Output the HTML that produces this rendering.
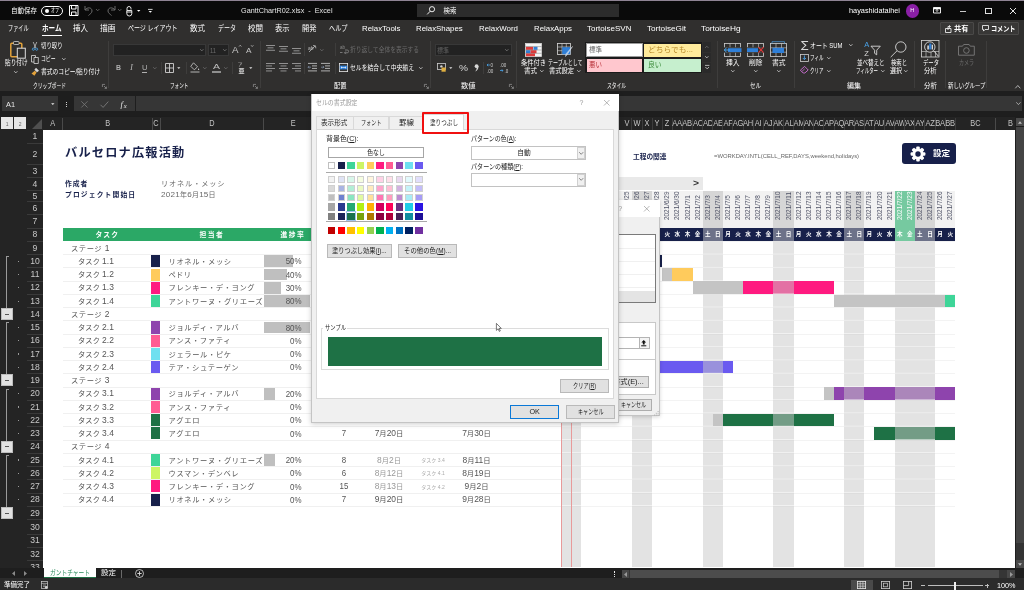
<!DOCTYPE html>
<html lang="ja"><head><meta charset="utf-8"><title>GanttChartR02.xlsx - Excel</title><style>
html,body{margin:0;padding:0;background:#1d1d1d;}
body{width:1024px;height:590px;position:relative;overflow:hidden;will-change:transform;font-family:"Liberation Sans","Noto Sans CJK JP",sans-serif;}
.a{position:absolute;box-sizing:border-box;}
.t{white-space:pre;}
.d{font-size:116%;}
.r{left:50%;bottom:0;font-size:6.4px;line-height:8px;height:8px;white-space:nowrap;transform-origin:0 50%;transform:translate(0,4px) rotate(-90deg);}
svg{position:absolute;overflow:visible;}
</style></head><body>
<div class="a " style="left:0px;top:0px;width:1024px;height:19.5px;background:#0a0a0a;"></div>
<div class="a " style="left:0px;top:0px;width:1024px;height:1px;background:#8f8494;"></div>
<div class="a t" style="left:11px;top:3.5px;height:14px;line-height:14px;font-size:7px;color:#fff;transform:scaleX(0.929);transform-origin:0 50%;">自動保存</div>
<div class="a " style="left:41px;top:5.5px;width:21.5px;height:10px;border:1px solid #fff;border-radius:5px;"></div>
<div class="a " style="left:44.5px;top:8.5px;width:4px;height:4px;background:#fff;border-radius:2px;"></div>
<div class="a t" style="left:51px;top:5.0px;height:11px;line-height:11px;font-size:5.5px;color:#fff;transform:scaleX(0.726);transform-origin:0 50%;">オフ</div>
<svg style="left:69px;top:5px;" width="10" height="11" viewBox="0 0 10 11"><path d="M0.5 0.5h8.5v10h-8.5z M2.5 0.5v3.5h4.5v-3.5 M2.5 10.5v-3.5h4.5v3.5" fill="none" stroke="#fff" stroke-width="1"/></svg>
<svg style="left:84px;top:5px;" width="10" height="10" viewBox="0 0 10 10"><path d="M1 1v4h4 M1 5c2-3 7-3 7 1c0 2-2 3-3.5 4.5" fill="none" stroke="#6b6b6b" stroke-width="1"/></svg>
<svg style="left:96px;top:9px;" width="4" height="3" viewBox="0 0 4 3"><path d="M0 0l1.7 1.8l1.7-1.8" fill="none" stroke="#6b6b6b" stroke-width="0.8"/></svg>
<svg style="left:106px;top:5px;" width="10" height="10" viewBox="0 0 10 10"><path d="M9 1v4h-4 M9 5c-2-3-7-3-7 1c0 2 2 3 3.5 4.5" fill="none" stroke="#6b6b6b" stroke-width="1"/></svg>
<svg style="left:117.5px;top:9px;" width="4" height="3" viewBox="0 0 4 3"><path d="M0 0l1.7 1.8l1.7-1.8" fill="none" stroke="#6b6b6b" stroke-width="0.8"/></svg>
<svg style="left:126px;top:6px;" width="7" height="10" viewBox="0 0 7 10"><path d="M1 4v-1.5a1.5 1.5 0 0 1 4 0v1 M0.8 4.5h5v3a2.3 2.3 0 0 1-5 0z M0.8 6h5" fill="none" stroke="#fff" stroke-width="0.9"/></svg>
<svg style="left:136.5px;top:9.5px;" width="4" height="3" viewBox="0 0 4 3"><path d="M0 0l1.7 1.8l1.7-1.8z" fill="#fff"/></svg>
<svg style="left:148px;top:8.5px;" width="5" height="4" viewBox="0 0 5 4"><path d="M0 0.4h4.6" stroke="#fff" stroke-width="0.8"/><path d="M0.6 2l1.7 1.8l1.7-1.8z" fill="#fff"/></svg>
<div class="a t" style="left:241px;top:3.5px;height:14px;line-height:14px;font-size:7.2px;color:#e6e6e6;transform:scaleX(1.009);transform-origin:0 50%;">GanttChartR02.xlsx  -  Excel</div>
<div class="a " style="left:417px;top:3.5px;width:202px;height:13.5px;background:#2c2c2c;"></div>
<svg style="left:427px;top:6px;" width="8" height="9" viewBox="0 0 8 9"><circle cx="5" cy="3.2" r="2.6" fill="none" stroke="#fff" stroke-width="0.9"/><path d="M3.2 5.2l-3 3.2" stroke="#fff" stroke-width="0.9"/></svg>
<div class="a t" style="left:443.5px;top:4.3px;height:13px;line-height:13px;font-size:6.5px;color:#fff;transform:scaleX(1.000);transform-origin:0 50%;">検索</div>
<div class="a t" style="left:848.5px;top:3.5px;height:14px;line-height:14px;font-size:7.2px;color:#fff;transform:scaleX(1.021);transform-origin:0 50%;">hayashidataihei</div>
<div class="a " style="left:905.5px;top:4px;width:13.5px;height:13.5px;background:#8a1fa6;border-radius:7px;"></div>
<div class="a t" style="left:905.5px;top:5.3px;height:11px;line-height:11px;font-size:5.5px;color:#fff;width:13.5px;text-align:center;">H</div>
<svg style="left:933px;top:7px;" width="8" height="7" viewBox="0 0 8 7"><path d="M0.5 0.5h7v5.5h-7z" fill="none" stroke="#fff" stroke-width="0.9"/><path d="M0.5 1.5h7" stroke="#fff" stroke-width="1.6"/><path d="M4 5v-2.5 M2.8 3.6l1.2-1.2l1.2 1.2" fill="none" stroke="#fff" stroke-width="0.8"/></svg>
<div class="a " style="left:960px;top:10.6px;width:6px;height:0.9px;background:#c8c8c8;"></div>
<div class="a " style="left:985px;top:7.5px;width:6.5px;height:6.5px;border:0.9px solid #e0e0e0;"></div>
<svg style="left:1009.5px;top:7.5px;" width="6" height="6" viewBox="0 0 6 6"><path d="M0 0l6 6M6 0l-6 6" stroke="#fff" stroke-width="0.9"/></svg>
<div class="a " style="left:0px;top:19.5px;width:1024px;height:71.7px;background:#302f2e;"></div>
<div class="a t" style="left:8px;top:20.8px;height:15px;line-height:15px;font-size:7.6px;color:#fff;transform:scaleX(0.675);transform-origin:0 50%;">ファイル</div>
<div class="a t" style="left:42px;top:20.8px;height:15px;line-height:15px;font-size:7.6px;color:#fff;font-weight:bold;transform:scaleX(0.864);transform-origin:0 50%;">ホーム</div>
<div class="a t" style="left:73px;top:20.8px;height:15px;line-height:15px;font-size:7.6px;color:#fff;transform:scaleX(0.988);transform-origin:0 50%;">挿入</div>
<div class="a t" style="left:100px;top:20.8px;height:15px;line-height:15px;font-size:7.6px;color:#fff;transform:scaleX(1.021);transform-origin:0 50%;">描画</div>
<div class="a t" style="left:128px;top:20.8px;height:15px;line-height:15px;font-size:7.6px;color:#fff;transform:scaleX(0.789);transform-origin:0 50%;">ページ レイアウト</div>
<div class="a t" style="left:190px;top:20.8px;height:15px;line-height:15px;font-size:7.6px;color:#fff;transform:scaleX(0.988);transform-origin:0 50%;">数式</div>
<div class="a t" style="left:218px;top:20.8px;height:15px;line-height:15px;font-size:7.6px;color:#fff;transform:scaleX(0.790);transform-origin:0 50%;">データ</div>
<div class="a t" style="left:248px;top:20.8px;height:15px;line-height:15px;font-size:7.6px;color:#fff;transform:scaleX(0.988);transform-origin:0 50%;">校閲</div>
<div class="a t" style="left:275px;top:20.8px;height:15px;line-height:15px;font-size:7.6px;color:#fff;transform:scaleX(0.955);transform-origin:0 50%;">表示</div>
<div class="a t" style="left:302px;top:20.8px;height:15px;line-height:15px;font-size:7.6px;color:#fff;transform:scaleX(0.955);transform-origin:0 50%;">開発</div>
<div class="a t" style="left:329px;top:20.8px;height:15px;line-height:15px;font-size:7.6px;color:#fff;transform:scaleX(0.812);transform-origin:0 50%;">ヘルプ</div>
<div class="a t" style="left:362px;top:20.8px;height:15px;line-height:15px;font-size:7.6px;color:#fff;transform:scaleX(1.036);transform-origin:0 50%;">RelaxTools</div>
<div class="a t" style="left:415.7px;top:20.8px;height:15px;line-height:15px;font-size:7.6px;color:#fff;transform:scaleX(1.036);transform-origin:0 50%;">RelaxShapes</div>
<div class="a t" style="left:478.5px;top:20.8px;height:15px;line-height:15px;font-size:7.6px;color:#fff;transform:scaleX(1.042);transform-origin:0 50%;">RelaxWord</div>
<div class="a t" style="left:533.5px;top:20.8px;height:15px;line-height:15px;font-size:7.6px;color:#fff;transform:scaleX(1.034);transform-origin:0 50%;">RelaxApps</div>
<div class="a t" style="left:587px;top:20.8px;height:15px;line-height:15px;font-size:7.6px;color:#fff;transform:scaleX(1.054);transform-origin:0 50%;">TortoiseSVN</div>
<div class="a t" style="left:647px;top:20.8px;height:15px;line-height:15px;font-size:7.6px;color:#fff;transform:scaleX(1.074);transform-origin:0 50%;">TortoiseGit</div>
<div class="a t" style="left:701px;top:20.8px;height:15px;line-height:15px;font-size:7.6px;color:#fff;transform:scaleX(1.088);transform-origin:0 50%;">TortoiseHg</div>
<div class="a " style="left:42px;top:34.5px;width:19.5px;height:1.5px;background:#fff;"></div>
<div class="a " style="left:940px;top:22px;width:33.5px;height:13px;background:#383736;border-radius:1px;border:0.8px solid #4a4948;"></div>
<svg style="left:945px;top:24.5px;" width="7" height="8" viewBox="0 0 7 8"><path d="M0.5 3.5h5.5v4h-5.5z" fill="none" stroke="#fff" stroke-width="0.8"/><path d="M3 5v-3.5h2 M4 0.3l1.5 1.2l-1.5 1.2" fill="none" stroke="#fff" stroke-width="0.8"/></svg>
<div class="a t" style="left:953.5px;top:21.1px;height:15px;line-height:15px;font-size:7.4px;color:#fff;font-weight:bold;transform:scaleX(0.980);transform-origin:0 50%;">共有</div>
<div class="a " style="left:977.5px;top:22px;width:41.5px;height:13px;background:#383736;border-radius:1px;border:0.8px solid #4a4948;"></div>
<svg style="left:982px;top:25px;" width="7" height="7" viewBox="0 0 7 7"><path d="M0.5 0.5h6v4h-3.5l-1.5 1.6v-1.6h-1z" fill="none" stroke="#fff" stroke-width="0.8"/></svg>
<div class="a t" style="left:990.5px;top:21.1px;height:15px;line-height:15px;font-size:7.4px;color:#fff;font-weight:bold;transform:scaleX(0.828);transform-origin:0 50%;">コメント</div>
<svg style="left:10px;top:41px;" width="16" height="18" viewBox="0 0 16 18"><rect x="0.8" y="2.2" width="11" height="13.5" rx="1" fill="none" stroke="#e2a23b" stroke-width="1.5"/><rect x="3.5" y="0.5" width="5.5" height="3" rx="0.8" fill="#302f2e" stroke="#d0d0d0" stroke-width="0.8"/><rect x="7.3" y="7.2" width="8" height="10" fill="#302f2e" stroke="#e0e0e0" stroke-width="1"/></svg>
<div class="a t" style="left:4.8px;top:56.0px;height:14px;line-height:14px;font-size:7px;color:#fff;transform:scaleX(0.804);transform-origin:0 50%;">貼り付け</div>
<svg style="left:14px;top:71px;" width="4" height="3" viewBox="0 0 4 3"><path d="M0.2 0.2l1.6 1.7l1.6-1.7" fill="none" stroke="#d0d0d0" stroke-width="0.8"/></svg>
<svg style="left:32px;top:41.5px;" width="6" height="9" viewBox="0 0 6 9"><path d="M1.2 0l2.6 6 M4.8 0l-2.6 6" stroke="#d8d8d8" stroke-width="0.7"/><circle cx="1.4" cy="7.2" r="1.1" fill="none" stroke="#4aa3e8" stroke-width="0.8"/><circle cx="4.6" cy="7.2" r="1.1" fill="none" stroke="#4aa3e8" stroke-width="0.8"/></svg>
<div class="a t" style="left:41px;top:39.0px;height:14px;line-height:14px;font-size:7px;color:#fff;transform:scaleX(0.768);transform-origin:0 50%;">切り取り</div>
<svg style="left:31px;top:54.5px;" width="8" height="9" viewBox="0 0 8 9"><path d="M0.5 0.5h4v6.5h-4z" fill="none" stroke="#d8d8d8" stroke-width="0.8"/><path d="M3 2.5h4.3v6h-4.3z" fill="#302f2e" stroke="#d8d8d8" stroke-width="0.8"/></svg>
<div class="a t" style="left:41px;top:52.3px;height:14px;line-height:14px;font-size:7px;color:#fff;transform:scaleX(0.690);transform-origin:0 50%;">コピー</div>
<svg style="left:61.5px;top:58px;" width="4" height="3" viewBox="0 0 4 3"><path d="M0.2 0.2l1.6 1.7l1.6-1.7" fill="none" stroke="#d0d0d0" stroke-width="0.8"/></svg>
<svg style="left:30.5px;top:67px;" width="9" height="9" viewBox="0 0 9 9"><path d="M5 0.8l3 3l-2 1.5l-2.6-2.6z" fill="#d8d8d8"/><path d="M0.5 6.5l3.3-2.7l1.8 1.8l-2.2 3.2z" fill="#e2a23b"/></svg>
<div class="a t" style="left:41px;top:65.3px;height:14px;line-height:14px;font-size:7px;color:#fff;transform:scaleX(0.820);transform-origin:0 50%;">書式のコピー/貼り付け</div>
<div class="a t" style="left:32.5px;top:78.5px;height:14px;line-height:14px;font-size:6.8px;color:#fff;transform:scaleX(0.694);transform-origin:0 50%;">クリップボード</div>
<svg style="left:101.5px;top:84px;" width="5" height="5" viewBox="0 0 5 5"><path d="M0.4 3v-2.6h2.6 M2 2l2.4 2.4 M4.4 2.6v1.8h-1.8" fill="none" stroke="#9a9a9a" stroke-width="0.7"/></svg>
<div class="a " style="left:107.5px;top:41px;width:1px;height:47px;background:#3e3d3c;"></div>
<div class="a " style="left:112.5px;top:43.6px;width:93px;height:12.5px;background:#222;border:1px solid #383838;"></div>
<svg style="left:199.5px;top:49px;" width="4" height="3" viewBox="0 0 4 3"><path d="M0.2 0.2l1.6 1.7l1.6-1.7" fill="none" stroke="#7a7a7a" stroke-width="0.8"/></svg>
<div class="a " style="left:207.5px;top:43.6px;width:21px;height:12.5px;background:#222;border:1px solid #383838;"></div>
<div class="a t" style="left:209.5px;top:43.5px;height:14px;line-height:14px;font-size:6.8px;color:#6c6c6c;transform:scaleX(0.850);transform-origin:0 50%;">11</div>
<svg style="left:223px;top:49px;" width="4" height="3" viewBox="0 0 4 3"><path d="M0.2 0.2l1.6 1.7l1.6-1.7" fill="none" stroke="#7a7a7a" stroke-width="0.8"/></svg>
<div class="a t" style="left:232px;top:41.0px;height:18px;line-height:18px;font-size:9px;color:#c4c4c4;transform:scaleX(1.081);transform-origin:0 50%;">A</div>
<svg style="left:238.5px;top:45px;" width="3" height="2" viewBox="0 0 3 2"><path d="M0 1.6l1.2-1.4l1.2 1.4" fill="none" stroke="#d8d8d8" stroke-width="0.6"/></svg>
<div class="a t" style="left:245.5px;top:42.5px;height:16px;line-height:16px;font-size:8px;color:#c4c4c4;transform:scaleX(1.029);transform-origin:0 50%;">A</div>
<svg style="left:251.3px;top:45.2px;" width="3" height="2" viewBox="0 0 3 2"><path d="M0 0.2l1.2 1.4l1.2-1.4" fill="none" stroke="#d8d8d8" stroke-width="0.6"/></svg>
<div class="a t" style="left:116px;top:60.0px;height:15px;line-height:15px;font-size:7.5px;color:#b0b0b0;font-weight:bold;transform:scaleX(0.922);transform-origin:0 50%;">B</div>
<div class="a t" style="left:129.5px;top:60.0px;height:15px;line-height:15px;font-size:7.5px;color:#b0b0b0;font-style:italic;font-family:'Liberation Serif',serif;transform:scaleX(1.200);transform-origin:0 50%;">I</div>
<div class="a t" style="left:141.5px;top:59.5px;height:15px;line-height:15px;font-size:7.5px;color:#b0b0b0;transform:scaleX(1.014);transform-origin:0 50%;">U</div>
<div class="a " style="left:141.5px;top:72px;width:5.5px;height:0.8px;background:#b0b0b0;"></div>
<svg style="left:153px;top:66.5px;" width="4" height="3" viewBox="0 0 4 3"><path d="M0.2 0.2l1.6 1.7l1.6-1.7" fill="none" stroke="#6c6c6c" stroke-width="0.8"/></svg>
<div class="a " style="left:160.5px;top:62px;width:1px;height:12px;background:#3e3d3c;"></div>
<svg style="left:164.5px;top:62.5px;" width="9" height="10" viewBox="0 0 9 10"><path d="M0.5 0.5h8v9h-8z M4.5 0.5v9 M0.5 5h8" fill="none" stroke="#d0d0d0" stroke-width="0.9"/></svg>
<svg style="left:177px;top:66.5px;" width="4" height="3" viewBox="0 0 4 3"><path d="M0.2 0.2l1.6 1.8l1.6-1.8z" fill="#e0e0e0"/></svg>
<div class="a " style="left:185.5px;top:62px;width:1px;height:12px;background:#3e3d3c;"></div>
<svg style="left:190px;top:62px;" width="10" height="11" viewBox="0 0 10 11"><path d="M3.5 0.8l4 4l-3.2 3l-3.5-3.5z" fill="none" stroke="#cfcfcf" stroke-width="0.8"/><path d="M8.6 6.3c0.8 1 0.8 1.8 0 1.8s-0.8-0.8 0-1.8" fill="#cfcfcf"/><rect x="0.5" y="9.3" width="9" height="1.4" fill="#8f8f8f"/></svg>
<svg style="left:203px;top:66.5px;" width="4" height="3" viewBox="0 0 4 3"><path d="M0.2 0.2l1.6 1.7l1.6-1.7" fill="none" stroke="#6c6c6c" stroke-width="0.8"/></svg>
<div class="a t" style="left:212.5px;top:58.5px;height:16px;line-height:16px;font-size:8px;color:#c0c0c0;transform:scaleX(1.310);transform-origin:0 50%;">A</div>
<div class="a " style="left:211.5px;top:71.3px;width:9px;height:1.4px;background:#8f8f8f;"></div>
<svg style="left:224px;top:66.5px;" width="4" height="3" viewBox="0 0 4 3"><path d="M0.2 0.2l1.6 1.7l1.6-1.7" fill="none" stroke="#6c6c6c" stroke-width="0.8"/></svg>
<div class="a " style="left:232px;top:62px;width:1px;height:12px;background:#3e3d3c;"></div>
<svg style="left:238px;top:62px;" width="6" height="11" viewBox="0 0 6 11"><text x="0" y="4" font-size="4.5" fill="#d0d0d0" font-family="Liberation Sans, Noto Sans CJK JP, sans-serif">ア</text><text x="0.5" y="10.5" font-size="6" fill="#d0d0d0" font-weight="bold" font-family="Liberation Sans, Noto Sans CJK JP, sans-serif">亜</text></svg>
<svg style="left:248.5px;top:66.5px;" width="4" height="3" viewBox="0 0 4 3"><path d="M0.2 0.2l1.6 1.8l1.6-1.8z" fill="#e0e0e0"/></svg>
<div class="a t" style="left:170px;top:78.5px;height:14px;line-height:14px;font-size:6.8px;color:#fff;transform:scaleX(0.680);transform-origin:0 50%;">フォント</div>
<svg style="left:253px;top:84px;" width="5" height="5" viewBox="0 0 5 5"><path d="M0.4 3v-2.6h2.6 M2 2l2.4 2.4 M4.4 2.6v1.8h-1.8" fill="none" stroke="#9a9a9a" stroke-width="0.7"/></svg>
<div class="a " style="left:259.5px;top:41px;width:1px;height:47px;background:#3e3d3c;"></div>
<svg style="left:266px;top:44.5px;" width="9" height="7.199999999999999" viewBox="0 0 9 7.199999999999999"><rect x="0.0" y="0.0" width="9" height="0.9" fill="#9c9c9c"/><rect x="1.5" y="2.4" width="6" height="0.9" fill="#9c9c9c"/><rect x="0.0" y="4.8" width="9" height="0.9" fill="#9c9c9c"/></svg>
<svg style="left:279px;top:46px;" width="9" height="7.199999999999999" viewBox="0 0 9 7.199999999999999"><rect x="0.0" y="0.0" width="9" height="0.9" fill="#9c9c9c"/><rect x="1.5" y="2.4" width="6" height="0.9" fill="#9c9c9c"/><rect x="0.0" y="4.8" width="9" height="0.9" fill="#9c9c9c"/></svg>
<svg style="left:292px;top:48px;" width="9" height="7.199999999999999" viewBox="0 0 9 7.199999999999999"><rect x="0.0" y="0.0" width="9" height="0.9" fill="#9c9c9c"/><rect x="1.5" y="2.4" width="6" height="0.9" fill="#9c9c9c"/><rect x="0.0" y="4.8" width="9" height="0.9" fill="#9c9c9c"/></svg>
<div class="a " style="left:266px;top:44px;width:9px;height:0px;"></div>
<div class="a " style="left:304px;top:43px;width:1px;height:13px;background:#3e3d3c;"></div>
<svg style="left:308px;top:44px;" width="9" height="10" viewBox="0 0 9 10"><path d="M1 8l6-6 M5 1.5l2.5 0.3l0.3 2.5" fill="none" stroke="#bdbdbd" stroke-width="0.8"/><text x="0" y="6" font-size="5" fill="#bdbdbd" font-family="Liberation Sans, sans-serif">ab</text></svg>
<svg style="left:320px;top:49px;" width="4" height="3" viewBox="0 0 4 3"><path d="M0.2 0.2l1.6 1.7l1.6-1.7" fill="none" stroke="#6c6c6c" stroke-width="0.8"/></svg>
<div class="a " style="left:334.5px;top:43px;width:1px;height:13px;background:#3e3d3c;"></div>
<svg style="left:339.5px;top:45px;" width="9" height="10" viewBox="0 0 9 10"><text x="0" y="4" font-size="4.6" fill="#8a8a8a" font-family="Liberation Sans, sans-serif">ab</text><path d="M0 7.5h2.5 M5 5h2.2a1.4 1.4 0 0 1 0 2.8h-2.6 M5.8 6.5l-1.3 1.3l1.3 1.3" fill="none" stroke="#8a8a8a" stroke-width="0.8"/></svg>
<div class="a t" style="left:349.5px;top:43.3px;height:14px;line-height:14px;font-size:7px;color:#6a6a6a;transform:scaleX(0.823);transform-origin:0 50%;">折り返して全体を表示する</div>
<svg style="left:266px;top:62.5px;" width="9" height="10.0" viewBox="0 0 9 10.0"><rect x="0" y="0.0" width="9" height="0.9" fill="#9c9c9c"/><rect x="0" y="2.5" width="6" height="0.9" fill="#9c9c9c"/><rect x="0" y="5.0" width="9" height="0.9" fill="#9c9c9c"/><rect x="0" y="7.5" width="6" height="0.9" fill="#9c9c9c"/></svg>
<svg style="left:279px;top:62.5px;" width="9" height="10.0" viewBox="0 0 9 10.0"><rect x="0.0" y="0.0" width="9" height="0.9" fill="#9c9c9c"/><rect x="1.5" y="2.5" width="6" height="0.9" fill="#9c9c9c"/><rect x="0.0" y="5.0" width="9" height="0.9" fill="#9c9c9c"/><rect x="1.5" y="7.5" width="6" height="0.9" fill="#9c9c9c"/></svg>
<svg style="left:292px;top:62.5px;" width="9" height="10.0" viewBox="0 0 9 10.0"><rect x="0" y="0.0" width="9" height="0.9" fill="#9c9c9c"/><rect x="3" y="2.5" width="6" height="0.9" fill="#9c9c9c"/><rect x="0" y="5.0" width="9" height="0.9" fill="#9c9c9c"/><rect x="3" y="7.5" width="6" height="0.9" fill="#9c9c9c"/></svg>
<div class="a " style="left:304px;top:62px;width:1px;height:12px;background:#3e3d3c;"></div>
<svg style="left:308px;top:62.5px;" width="9" height="10" viewBox="0 0 9 10"><path d="M0 0.4h9 M4 2.9h5 M4 5.4h5 M0 7.9h9" stroke="#bdbdbd" stroke-width="0.9"/><path d="M3 4.2h-3 M1.2 3l-1.2 1.2l1.2 1.2" fill="none" stroke="#8a9ab0" stroke-width="0.7"/></svg>
<svg style="left:321px;top:62.5px;" width="9" height="10" viewBox="0 0 9 10"><path d="M0 0.4h9 M4 2.9h5 M4 5.4h5 M0 7.9h9" stroke="#bdbdbd" stroke-width="0.9"/><path d="M0 4.2h3 M1.8 3l1.2 1.2l-1.2 1.2" fill="none" stroke="#8a9ab0" stroke-width="0.7"/></svg>
<div class="a " style="left:334.5px;top:62px;width:1px;height:12px;background:#3e3d3c;"></div>
<svg style="left:338.5px;top:63px;" width="9" height="9" viewBox="0 0 9 9"><rect x="0.4" y="0.4" width="8.2" height="8.2" fill="none" stroke="#e8e8e8" stroke-width="0.8"/><rect x="0.8" y="2.6" width="7.4" height="3.8" fill="#2f7fd8"/><path d="M2 4.5h5 M3 3.6l-1 0.9l1 0.9 M6 3.6l1 0.9l-1 0.9" fill="none" stroke="#fff" stroke-width="0.6"/></svg>
<div class="a t" style="left:349.5px;top:60.8px;height:14px;line-height:14px;font-size:7px;color:#fff;transform:scaleX(0.833);transform-origin:0 50%;">セルを結合して中央揃え</div>
<svg style="left:418.5px;top:66.5px;" width="4" height="3" viewBox="0 0 4 3"><path d="M0.2 0.2l1.6 1.7l1.6-1.7" fill="none" stroke="#d0d0d0" stroke-width="0.8"/></svg>
<div class="a t" style="left:334px;top:78.5px;height:14px;line-height:14px;font-size:6.8px;color:#fff;transform:scaleX(0.920);transform-origin:0 50%;">配置</div>
<svg style="left:423.5px;top:84px;" width="5" height="5" viewBox="0 0 5 5"><path d="M0.4 3v-2.6h2.6 M2 2l2.4 2.4 M4.4 2.6v1.8h-1.8" fill="none" stroke="#9a9a9a" stroke-width="0.7"/></svg>
<div class="a " style="left:430px;top:41px;width:1px;height:47px;background:#3e3d3c;"></div>
<div class="a " style="left:434.5px;top:43.6px;width:77px;height:12.5px;background:#222;border:1px solid #383838;"></div>
<div class="a t" style="left:437px;top:43.5px;height:14px;line-height:14px;font-size:6.8px;color:#5f5f5f;transform:scaleX(0.883);transform-origin:0 50%;">標準</div>
<svg style="left:504.5px;top:49px;" width="4" height="3" viewBox="0 0 4 3"><path d="M0.2 0.2l1.6 1.7l1.6-1.7" fill="none" stroke="#7a7a7a" stroke-width="0.8"/></svg>
<svg style="left:436.5px;top:63px;" width="9" height="9" viewBox="0 0 9 9"><rect x="0.4" y="0.4" width="8" height="6" fill="none" stroke="#cfcfcf" stroke-width="0.8"/><circle cx="4.4" cy="3.4" r="1.2" fill="#cfcfcf"/><rect x="4.5" y="4.5" width="4.2" height="4.2" fill="#e0b040"/></svg>
<svg style="left:448.5px;top:66.5px;" width="4" height="3" viewBox="0 0 4 3"><path d="M0.2 0.2l1.6 1.8l1.6-1.8z" fill="#e0e0e0"/></svg>
<div class="a t" style="left:458.5px;top:58.5px;height:18px;line-height:18px;font-size:9px;color:#d8d8d8;transform:scaleX(1.123);transform-origin:0 50%;">%</div>
<svg style="left:474px;top:63.5px;" width="5" height="8" viewBox="0 0 5 8"><circle cx="2.6" cy="2.2" r="1.9" fill="#d8d8d8"/><path d="M4.4 2.2c0.3 2.6-1 4.4-3.4 5.2c1.4-1.2 1.8-2.4 1.6-3.8z" fill="#d8d8d8"/></svg>
<div class="a " style="left:483px;top:62px;width:1px;height:12px;background:#3e3d3c;"></div>
<svg style="left:487px;top:62.5px;" width="10" height="10" viewBox="0 0 10 10"><path d="M0 2h3 M1.2 0.8l-1.2 1.2l1.2 1.2" fill="none" stroke="#4aa3e8" stroke-width="0.8"/><text x="3.4" y="4.2" font-size="4.5" fill="#cfcfcf" font-family="Liberation Sans, sans-serif">0</text><text x="0" y="9.6" font-size="4.5" fill="#cfcfcf" font-family="Liberation Sans, sans-serif">.00</text></svg>
<svg style="left:500px;top:62.5px;" width="10" height="10" viewBox="0 0 10 10"><path d="M0 7.5h3 M1.8 6.3l1.2 1.2l-1.2 1.2" fill="none" stroke="#4aa3e8" stroke-width="0.8"/><text x="0" y="4.2" font-size="4.5" fill="#cfcfcf" font-family="Liberation Sans, sans-serif">.00</text><text x="4.4" y="9.6" font-size="4.5" fill="#cfcfcf" font-family="Liberation Sans, sans-serif">.0</text></svg>
<div class="a t" style="left:461px;top:78.5px;height:14px;line-height:14px;font-size:6.8px;color:#fff;transform:scaleX(1.067);transform-origin:0 50%;">数値</div>
<svg style="left:508.5px;top:84px;" width="5" height="5" viewBox="0 0 5 5"><path d="M0.4 3v-2.6h2.6 M2 2l2.4 2.4 M4.4 2.6v1.8h-1.8" fill="none" stroke="#9a9a9a" stroke-width="0.7"/></svg>
<div class="a " style="left:515.5px;top:41px;width:1px;height:47px;background:#3e3d3c;"></div>
<svg style="left:525px;top:42.5px;" width="17" height="14" viewBox="0 0 17 14"><rect x="0.5" y="0.5" width="16" height="13" fill="#f4f4f4" stroke="#d8d8d8" stroke-width="0.8"/><rect x="1" y="3.8" width="7" height="3" fill="#e03a3a"/><rect x="8.5" y="3.8" width="4" height="3" fill="#2f7fd8"/><rect x="1" y="7.2" width="4.5" height="3" fill="#2f7fd8"/><rect x="5.5" y="7.2" width="6" height="3" fill="#e03a3a"/><rect x="1" y="10.4" width="9" height="2.8" fill="#e03a3a"/><path d="M0.5 3.6h16 M0.5 7h16 M0.5 10.3h16" stroke="#555" stroke-width="0.4"/></svg>
<div class="a t" style="left:521px;top:56.0px;height:14px;line-height:14px;font-size:7px;color:#fff;transform:scaleX(0.893);transform-origin:0 50%;">条件付き</div>
<div class="a t" style="left:524px;top:64.3px;height:14px;line-height:14px;font-size:7px;color:#fff;transform:scaleX(0.929);transform-origin:0 50%;">書式</div>
<svg style="left:540px;top:70px;" width="4" height="3" viewBox="0 0 4 3"><path d="M0.2 0.2l1.6 1.7l1.6-1.7" fill="none" stroke="#d0d0d0" stroke-width="0.8"/></svg>
<svg style="left:557px;top:42.5px;" width="17" height="15" viewBox="0 0 17 15"><rect x="0.5" y="0.5" width="13" height="11" fill="#302f2e" stroke="#d8d8d8" stroke-width="0.8"/><path d="M0.5 4h13 M0.5 7.7h13 M5 0.5v11 M9.3 0.5v11" stroke="#d8d8d8" stroke-width="0.6"/><rect x="5.2" y="4.2" width="8" height="7" fill="#2f7fd8"/><path d="M15.5 3.5l-5 7.5l-2 2.5l0.8-3z" fill="#9fc4ef" stroke="#e8e8e8" stroke-width="0.5"/></svg>
<div class="a t" style="left:548px;top:56.0px;height:14px;line-height:14px;font-size:7px;color:#fff;transform:scaleX(0.713);transform-origin:0 50%;">テーブルとして</div>
<div class="a t" style="left:549px;top:64.3px;height:14px;line-height:14px;font-size:7px;color:#fff;transform:scaleX(0.893);transform-origin:0 50%;">書式設定</div>
<svg style="left:577px;top:70px;" width="4" height="3" viewBox="0 0 4 3"><path d="M0.2 0.2l1.6 1.7l1.6-1.7" fill="none" stroke="#d0d0d0" stroke-width="0.8"/></svg>
<div class="a " style="left:584.5px;top:42px;width:117px;height:30.5px;background:#1b1b1b;"></div>
<div class="a " style="left:586px;top:43px;width:56.5px;height:14px;background:#fff;border:1px solid #9a9a9a;"></div>
<div class="a t" style="left:589px;top:43.0px;height:14px;line-height:14px;font-size:7px;color:#6a6a6a;transform:scaleX(0.929);transform-origin:0 50%;">標準</div>
<div class="a " style="left:644px;top:43.5px;width:56.5px;height:13px;background:#ffeb9c;"></div>
<div class="a t" style="left:647.5px;top:43.0px;height:14px;line-height:14px;font-size:7px;color:#b88a2a;transform:scaleX(1.108);transform-origin:0 50%;">どちらでも...</div>
<div class="a " style="left:586.5px;top:58.5px;width:55.5px;height:13px;background:#ffc7ce;"></div>
<div class="a t" style="left:589px;top:58.0px;height:14px;line-height:14px;font-size:7px;color:#b8323a;transform:scaleX(0.929);transform-origin:0 50%;">悪い</div>
<div class="a " style="left:644px;top:58.5px;width:56.5px;height:13px;background:#c6efce;"></div>
<div class="a t" style="left:647.5px;top:58.0px;height:14px;line-height:14px;font-size:7px;color:#3a8a3a;transform:scaleX(0.964);transform-origin:0 50%;">良い</div>
<div class="a " style="left:702.5px;top:42px;width:8px;height:10px;background:#2a2a2a;"></div>
<svg style="left:704.7px;top:46px;" width="4" height="3" viewBox="0 0 4 3"><path d="M0.2 1.9l1.6-1.7l1.6 1.7" fill="none" stroke="#6c6c6c" stroke-width="0.8"/></svg>
<div class="a " style="left:702.5px;top:52.5px;width:8px;height:9.5px;background:#2a2a2a;"></div>
<svg style="left:704.7px;top:55.7px;" width="4" height="3" viewBox="0 0 4 3"><path d="M0.2 0.2l1.6 1.7l1.6-1.7" fill="none" stroke="#d0d0d0" stroke-width="0.8"/></svg>
<div class="a " style="left:702.5px;top:62.5px;width:8px;height:10px;background:#2a2a2a;"></div>
<svg style="left:704.5px;top:65px;" width="4.4" height="5" viewBox="0 0 4.4 5"><path d="M0 0.4h4.4" stroke="#d0d0d0" stroke-width="0.8"/><path d="M0.4 2l1.8 1.9l1.8-1.9" fill="none" stroke="#d0d0d0" stroke-width="0.8"/></svg>
<div class="a t" style="left:607px;top:78.5px;height:14px;line-height:14px;font-size:6.8px;color:#fff;transform:scaleX(0.699);transform-origin:0 50%;">スタイル</div>
<div class="a " style="left:716.5px;top:41px;width:1px;height:47px;background:#3e3d3c;"></div>
<svg style="left:724px;top:42.5px;" width="17" height="14" viewBox="0 0 17 14"><rect x="0.5" y="0.5" width="16" height="13" fill="none" stroke="#d0d0d0" stroke-width="0.8"/><path d="M0.5 4.8h16 M0.5 9.2h16 M6 0.5v13 M11.5 0.5v13" stroke="#d0d0d0" stroke-width="0.6"/><rect x="0" y="4.3" width="17" height="5.4" fill="#302f2e"/><rect x="4" y="5.2" width="13.5" height="3.8" fill="#2f7fd8"/><path d="M0 7h6 M2.5 5l-2.3 2l2.3 2" fill="none" stroke="#4aa3e8" stroke-width="1"/></svg>
<div class="a t" style="left:726px;top:56.0px;height:14px;line-height:14px;font-size:7px;color:#fff;transform:scaleX(0.964);transform-origin:0 50%;">挿入</div>
<svg style="left:730.5px;top:70px;" width="4" height="3" viewBox="0 0 4 3"><path d="M0.2 0.2l1.6 1.7l1.6-1.7" fill="none" stroke="#d0d0d0" stroke-width="0.8"/></svg>
<svg style="left:747px;top:42.5px;" width="17" height="14" viewBox="0 0 17 14"><rect x="0.5" y="0.5" width="16" height="13" fill="none" stroke="#d0d0d0" stroke-width="0.8"/><path d="M0.5 4.8h16 M0.5 9.2h16 M6 0.5v13 M11.5 0.5v13" stroke="#d0d0d0" stroke-width="0.6"/><rect x="0" y="4.3" width="17" height="5.4" fill="#302f2e"/><rect x="0" y="5.2" width="11" height="3.8" fill="#2f7fd8"/><path d="M11.5 4.2l5 5.4 M16.5 4.2l-5 5.4" stroke="#e03a3a" stroke-width="1.1"/></svg>
<div class="a t" style="left:749px;top:56.0px;height:14px;line-height:14px;font-size:7px;color:#fff;transform:scaleX(0.964);transform-origin:0 50%;">削除</div>
<svg style="left:753.5px;top:70px;" width="4" height="3" viewBox="0 0 4 3"><path d="M0.2 0.2l1.6 1.7l1.6-1.7" fill="none" stroke="#d0d0d0" stroke-width="0.8"/></svg>
<svg style="left:770px;top:42.5px;" width="17" height="14" viewBox="0 0 17 14"><rect x="0.5" y="0.5" width="16" height="13" fill="none" stroke="#d0d0d0" stroke-width="0.8"/><path d="M0.5 4.8h16 M0.5 9.2h16 M6 0.5v13 M11.5 0.5v13" stroke="#d0d0d0" stroke-width="0.6"/><rect x="2.5" y="4.8" width="11.5" height="5.2" fill="#2f7fd8"/><path d="M2 0.5v-1.8h12.5v1.8" fill="none" stroke="#4aa3e8" stroke-width="0.7"/></svg>
<div class="a t" style="left:772px;top:56.0px;height:14px;line-height:14px;font-size:7px;color:#fff;transform:scaleX(0.964);transform-origin:0 50%;">書式</div>
<svg style="left:776.5px;top:70px;" width="4" height="3" viewBox="0 0 4 3"><path d="M0.2 0.2l1.6 1.7l1.6-1.7" fill="none" stroke="#d0d0d0" stroke-width="0.8"/></svg>
<div class="a t" style="left:750px;top:78.5px;height:14px;line-height:14px;font-size:6.8px;color:#fff;transform:scaleX(0.809);transform-origin:0 50%;">セル</div>
<div class="a " style="left:793.5px;top:41px;width:1px;height:47px;background:#3e3d3c;"></div>
<div class="a t" style="left:800.5px;top:35.0px;height:20px;line-height:20px;font-size:10px;color:#d8d8d8;font-family:'DejaVu Sans',sans-serif;transform:scaleX(1.111);transform-origin:0 50%;">∑</div>
<div class="a t" style="left:810px;top:38.5px;height:14px;line-height:14px;font-size:7px;color:#fff;transform:scaleX(0.844);transform-origin:0 50%;">オート SUM</div>
<svg style="left:848.5px;top:44px;" width="4" height="3" viewBox="0 0 4 3"><path d="M0.2 0.2l1.6 1.7l1.6-1.7" fill="none" stroke="#d0d0d0" stroke-width="0.8"/></svg>
<svg style="left:800px;top:53.5px;" width="9" height="8" viewBox="0 0 9 8"><rect x="0.4" y="0.4" width="8" height="7" fill="none" stroke="#d0d0d0" stroke-width="0.8"/><path d="M4.4 1.5v4 M2.8 4l1.6 1.6l1.6-1.6" fill="none" stroke="#4aa3e8" stroke-width="0.9"/></svg>
<div class="a t" style="left:810px;top:51.0px;height:14px;line-height:14px;font-size:7px;color:#fff;transform:scaleX(0.647);transform-origin:0 50%;">フィル</div>
<svg style="left:826.5px;top:57px;" width="4" height="3" viewBox="0 0 4 3"><path d="M0.2 0.2l1.6 1.7l1.6-1.7" fill="none" stroke="#d0d0d0" stroke-width="0.8"/></svg>
<svg style="left:800px;top:65.5px;" width="9" height="8" viewBox="0 0 9 8"><path d="M3.2 7l-2.8-2.8l4.2-3.8l3.6 3.6l-3.4 3z" fill="none" stroke="#d070d8" stroke-width="0.9"/><path d="M1.8 5.5l3-2.7" stroke="#d070d8" stroke-width="0.7"/></svg>
<div class="a t" style="left:810px;top:63.5px;height:14px;line-height:14px;font-size:7px;color:#fff;transform:scaleX(0.643);transform-origin:0 50%;">クリア</div>
<svg style="left:826.5px;top:69.5px;" width="4" height="3" viewBox="0 0 4 3"><path d="M0.2 0.2l1.6 1.7l1.6-1.7" fill="none" stroke="#d0d0d0" stroke-width="0.8"/></svg>
<svg style="left:863px;top:41px;" width="18" height="16" viewBox="0 0 18 16"><text x="1.2" y="6.4" font-size="7.5" fill="#4aa3e8" font-family="Liberation Sans, sans-serif">A</text><text x="1.2" y="14.5" font-size="7.5" fill="#d8d8d8" font-family="Liberation Sans, sans-serif">Z</text><path d="M8 5.2h9.3l-3.6 4v4.6l-2.1-1.5v-3.1z" fill="none" stroke="#d8d8d8" stroke-width="0.9"/></svg>
<div class="a t" style="left:857px;top:56.0px;height:14px;line-height:14px;font-size:7px;color:#fff;transform:scaleX(0.786);transform-origin:0 50%;">並べ替えと</div>
<div class="a t" style="left:856px;top:64.3px;height:14px;line-height:14px;font-size:7px;color:#fff;transform:scaleX(0.631);transform-origin:0 50%;">フィルター</div>
<svg style="left:880.5px;top:70px;" width="4" height="3" viewBox="0 0 4 3"><path d="M0.2 0.2l1.6 1.7l1.6-1.7" fill="none" stroke="#d0d0d0" stroke-width="0.8"/></svg>
<svg style="left:890px;top:40.5px;" width="17" height="17" viewBox="0 0 17 17"><circle cx="10.8" cy="6" r="5.2" fill="none" stroke="#d8d8d8" stroke-width="0.9"/><path d="M7 9.8l-6.3 6.3" stroke="#d8d8d8" stroke-width="0.9"/></svg>
<div class="a t" style="left:890.5px;top:56.0px;height:14px;line-height:14px;font-size:7px;color:#fff;transform:scaleX(0.762);transform-origin:0 50%;">検索と</div>
<div class="a t" style="left:889.5px;top:64.3px;height:14px;line-height:14px;font-size:7px;color:#fff;transform:scaleX(0.857);transform-origin:0 50%;">選択</div>
<svg style="left:903.8px;top:70px;" width="4" height="3" viewBox="0 0 4 3"><path d="M0.2 0.2l1.6 1.7l1.6-1.7" fill="none" stroke="#d0d0d0" stroke-width="0.8"/></svg>
<div class="a t" style="left:846.5px;top:78.5px;height:14px;line-height:14px;font-size:6.8px;color:#fff;transform:scaleX(1.030);transform-origin:0 50%;">編集</div>
<div class="a " style="left:914px;top:41px;width:1px;height:47px;background:#3e3d3c;"></div>
<svg style="left:921px;top:40px;" width="19" height="18" viewBox="0 0 19 18"><rect x="0.5" y="0.5" width="17.5" height="16.5" fill="none" stroke="#d8d8d8" stroke-width="0.8"/><path d="M0.5 11.5h17.5 M5 11.5v5.5 M10 11.5v5.5 M14.5 11.5v5.5" stroke="#d8d8d8" stroke-width="0.6"/><circle cx="8.8" cy="7" r="5.2" fill="#302f2e" stroke="#d8d8d8" stroke-width="0.9"/><rect x="6.3" y="5.5" width="1.6" height="4" fill="#d8d8d8"/><rect x="8.2" y="3.5" width="2.2" height="6" fill="#2f7fd8"/><rect x="10.7" y="4.7" width="1.3" height="4.8" fill="#d8d8d8"/><path d="M12.8 11l4.5 5" stroke="#d8d8d8" stroke-width="1"/></svg>
<div class="a t" style="left:922.5px;top:56.0px;height:14px;line-height:14px;font-size:7px;color:#fff;transform:scaleX(0.762);transform-origin:0 50%;">データ</div>
<div class="a t" style="left:924px;top:64.3px;height:14px;line-height:14px;font-size:7px;color:#fff;transform:scaleX(0.893);transform-origin:0 50%;">分析</div>
<div class="a t" style="left:923.5px;top:78.5px;height:14px;line-height:14px;font-size:6.8px;color:#fff;transform:scaleX(0.956);transform-origin:0 50%;">分析</div>
<div class="a " style="left:945px;top:41px;width:1px;height:47px;background:#3e3d3c;"></div>
<svg style="left:958px;top:44px;" width="17" height="12" viewBox="0 0 17 12"><path d="M0.5 2.2h4l1.2-1.7h5.4l1.2 1.7h4v9h-15.8z" fill="none" stroke="#7a7a7a" stroke-width="0.9"/><circle cx="8.4" cy="6.5" r="2.8" fill="none" stroke="#7a7a7a" stroke-width="0.9"/></svg>
<div class="a t" style="left:959px;top:56.0px;height:14px;line-height:14px;font-size:7px;color:#6c6c6c;transform:scaleX(0.714);transform-origin:0 50%;">カメラ</div>
<div class="a t" style="left:947.5px;top:78.5px;height:14px;line-height:14px;font-size:6.8px;color:#fff;transform:scaleX(0.795);transform-origin:0 50%;">新しいグループ</div>
<div class="a " style="left:986px;top:41px;width:1px;height:47px;background:#3e3d3c;"></div>
<svg style="left:1015px;top:85px;" width="6" height="4" viewBox="0 0 6 4"><path d="M0.3 3.3l2.5-2.8l2.5 2.8" fill="none" stroke="#d0d0d0" stroke-width="0.8"/></svg>
<div class="a " style="left:0px;top:91.2px;width:1024px;height:25.3px;background:#1e1e1e;"></div>
<div class="a " style="left:2px;top:96.3px;width:56px;height:15.2px;background:#363636;"></div>
<div class="a t" style="left:5.5px;top:97.0px;height:15px;line-height:15px;font-size:7.5px;color:#e8e8e8;transform:scaleX(0.980);transform-origin:0 50%;">A1</div>
<svg style="left:51px;top:103.2px;" width="4" height="3" viewBox="0 0 4 3"><path d="M0.1 0.2l1.7 1.9l1.7-1.9z" fill="#e8e8e8"/></svg>
<div class="a " style="left:65.5px;top:101.5px;width:1.2px;height:1.2px;background:#d0d0d0;"></div>
<div class="a " style="left:65.5px;top:103.8px;width:1.2px;height:1.2px;background:#d0d0d0;"></div>
<div class="a " style="left:65.5px;top:106.1px;width:1.2px;height:1.2px;background:#d0d0d0;"></div>
<div class="a " style="left:74px;top:96.3px;width:61px;height:15.2px;background:#363636;"></div>
<svg style="left:81px;top:101px;" width="7" height="7" viewBox="0 0 7 7"><path d="M0.3 0.3l6.2 6.2 M6.5 0.3l-6.2 6.2" stroke="#7a7a7a" stroke-width="0.8"/></svg>
<svg style="left:100px;top:101px;" width="9" height="7" viewBox="0 0 9 7"><path d="M0.5 3.8l2.6 2.6l5.2-5.8" fill="none" stroke="#7a7a7a" stroke-width="0.9"/></svg>
<div class="a t" style="left:120.5px;top:95.8px;height:17px;line-height:17px;font-size:8.5px;color:#e8e8e8;font-style:italic;font-family:'Liberation Serif',serif;">f</div>
<div class="a t" style="left:123.8px;top:98.8px;height:13px;line-height:13px;font-size:6.5px;color:#e8e8e8;font-style:italic;font-family:'Liberation Serif',serif;">x</div>
<div class="a " style="left:136px;top:96.3px;width:886px;height:15.2px;background:#363636;"></div>
<svg style="left:1015.5px;top:102.3px;" width="5" height="4" viewBox="0 0 5 4"><path d="M0.3 0.3l2.1 2.3l2.1-2.3" fill="none" stroke="#bdbdbd" stroke-width="0.8"/></svg>
<div class="a " style="left:43px;top:130px;width:971.8px;height:437.7px;background:#fff;"></div>
<div class="a " style="left:0px;top:116.5px;width:1024px;height:13.5px;background:#242424;"></div>
<div class="a " style="left:0px;top:130px;width:43px;height:437.5px;background:#242424;"></div>
<div class="a " style="left:1px;top:117.3px;width:12.2px;height:12.2px;background:#e6e6e6;"></div>
<div class="a t" style="left:1px;top:118.7px;height:10px;line-height:10px;font-size:5px;color:#666;width:12.2px;text-align:center;">1</div>
<div class="a " style="left:14px;top:117.3px;width:12.2px;height:12.2px;background:#e6e6e6;"></div>
<div class="a t" style="left:14px;top:118.7px;height:10px;line-height:10px;font-size:5px;color:#666;width:12.2px;text-align:center;">2</div>
<svg style="left:32px;top:119px;" width="10" height="10" viewBox="0 0 10 10"><path d="M10 0v10h-10z" fill="#4f4f4f"/></svg>
<div class="a t" style="left:43px;top:115.1px;height:17px;line-height:17px;font-size:8.4px;color:#c4c4c4;width:19.5px;text-align:center;transform:scaleX(0.88);">A</div>
<div class="a " style="left:62.0px;top:118px;width:1px;height:12px;background:#4a4a4a;"></div>
<div class="a t" style="left:62.5px;top:115.1px;height:17px;line-height:17px;font-size:8.4px;color:#c4c4c4;width:89.5px;text-align:center;transform:scaleX(0.88);">B</div>
<div class="a " style="left:151.5px;top:118px;width:1px;height:12px;background:#4a4a4a;"></div>
<div class="a t" style="left:152px;top:115.1px;height:17px;line-height:17px;font-size:8.4px;color:#c4c4c4;width:8px;text-align:center;transform:scaleX(0.88);">C</div>
<div class="a " style="left:159.5px;top:118px;width:1px;height:12px;background:#4a4a4a;"></div>
<div class="a t" style="left:160px;top:115.1px;height:17px;line-height:17px;font-size:8.4px;color:#c4c4c4;width:103.69999999999999px;text-align:center;transform:scaleX(0.88);">D</div>
<div class="a " style="left:263.2px;top:118px;width:1px;height:12px;background:#4a4a4a;"></div>
<div class="a t" style="left:263.7px;top:115.1px;height:17px;line-height:17px;font-size:8.4px;color:#c4c4c4;width:58.30000000000001px;text-align:center;transform:scaleX(0.88);">E</div>
<div class="a " style="left:321.5px;top:118px;width:1px;height:12px;background:#4a4a4a;"></div>
<div class="a t" style="left:621.83px;top:115.1px;height:17px;line-height:17px;font-size:8.4px;color:#c4c4c4;width:10.105px;text-align:center;transform:scaleX(0.88);">V</div>
<div class="a " style="left:631.44px;top:118px;width:1px;height:12px;background:#3c3c3c;"></div>
<div class="a t" style="left:631.94px;top:115.1px;height:17px;line-height:17px;font-size:8.4px;color:#c4c4c4;width:10.105px;text-align:center;transform:scaleX(0.88);">W</div>
<div class="a " style="left:641.54px;top:118px;width:1px;height:12px;background:#3c3c3c;"></div>
<div class="a t" style="left:642.04px;top:115.1px;height:17px;line-height:17px;font-size:8.4px;color:#c4c4c4;width:10.105px;text-align:center;transform:scaleX(0.88);">X</div>
<div class="a " style="left:651.65px;top:118px;width:1px;height:12px;background:#3c3c3c;"></div>
<div class="a t" style="left:652.15px;top:115.1px;height:17px;line-height:17px;font-size:8.4px;color:#c4c4c4;width:10.105px;text-align:center;transform:scaleX(0.88);">Y</div>
<div class="a " style="left:661.75px;top:118px;width:1px;height:12px;background:#3c3c3c;"></div>
<div class="a t" style="left:662.25px;top:115.1px;height:17px;line-height:17px;font-size:8.4px;color:#c4c4c4;width:10.105px;text-align:center;transform:scaleX(0.88);">Z</div>
<div class="a " style="left:671.86px;top:118px;width:1px;height:12px;background:#3c3c3c;"></div>
<div class="a t" style="left:669.36px;top:115.1px;height:17px;line-height:17px;font-size:8.4px;color:#c4c4c4;width:16.105px;text-align:center;letter-spacing:-0.2px;transform:scaleX(0.9);">AA</div>
<div class="a " style="left:681.96px;top:118px;width:1px;height:12px;background:#3c3c3c;"></div>
<div class="a t" style="left:679.46px;top:115.1px;height:17px;line-height:17px;font-size:8.4px;color:#c4c4c4;width:16.105px;text-align:center;letter-spacing:-0.2px;transform:scaleX(0.9);">AB</div>
<div class="a " style="left:692.07px;top:118px;width:1px;height:12px;background:#3c3c3c;"></div>
<div class="a t" style="left:689.57px;top:115.1px;height:17px;line-height:17px;font-size:8.4px;color:#c4c4c4;width:16.105px;text-align:center;letter-spacing:-0.2px;transform:scaleX(0.9);">AC</div>
<div class="a " style="left:702.17px;top:118px;width:1px;height:12px;background:#3c3c3c;"></div>
<div class="a t" style="left:699.67px;top:115.1px;height:17px;line-height:17px;font-size:8.4px;color:#c4c4c4;width:16.105px;text-align:center;letter-spacing:-0.2px;transform:scaleX(0.9);">AD</div>
<div class="a " style="left:712.28px;top:118px;width:1px;height:12px;background:#3c3c3c;"></div>
<div class="a t" style="left:709.78px;top:115.1px;height:17px;line-height:17px;font-size:8.4px;color:#c4c4c4;width:16.105px;text-align:center;letter-spacing:-0.2px;transform:scaleX(0.9);">AE</div>
<div class="a " style="left:722.38px;top:118px;width:1px;height:12px;background:#3c3c3c;"></div>
<div class="a t" style="left:719.88px;top:115.1px;height:17px;line-height:17px;font-size:8.4px;color:#c4c4c4;width:16.105px;text-align:center;letter-spacing:-0.2px;transform:scaleX(0.9);">AF</div>
<div class="a " style="left:732.49px;top:118px;width:1px;height:12px;background:#3c3c3c;"></div>
<div class="a t" style="left:729.99px;top:115.1px;height:17px;line-height:17px;font-size:8.4px;color:#c4c4c4;width:16.105px;text-align:center;letter-spacing:-0.2px;transform:scaleX(0.9);">AG</div>
<div class="a " style="left:742.59px;top:118px;width:1px;height:12px;background:#3c3c3c;"></div>
<div class="a t" style="left:740.09px;top:115.1px;height:17px;line-height:17px;font-size:8.4px;color:#c4c4c4;width:16.105px;text-align:center;letter-spacing:-0.2px;transform:scaleX(0.9);">AH</div>
<div class="a " style="left:752.7px;top:118px;width:1px;height:12px;background:#3c3c3c;"></div>
<div class="a t" style="left:750.2px;top:115.1px;height:17px;line-height:17px;font-size:8.4px;color:#c4c4c4;width:16.105px;text-align:center;letter-spacing:-0.2px;transform:scaleX(0.9);">AI</div>
<div class="a " style="left:762.8px;top:118px;width:1px;height:12px;background:#3c3c3c;"></div>
<div class="a t" style="left:760.3px;top:115.1px;height:17px;line-height:17px;font-size:8.4px;color:#c4c4c4;width:16.105px;text-align:center;letter-spacing:-0.2px;transform:scaleX(0.9);">AJ</div>
<div class="a " style="left:772.91px;top:118px;width:1px;height:12px;background:#3c3c3c;"></div>
<div class="a t" style="left:770.41px;top:115.1px;height:17px;line-height:17px;font-size:8.4px;color:#c4c4c4;width:16.105px;text-align:center;letter-spacing:-0.2px;transform:scaleX(0.9);">AK</div>
<div class="a " style="left:783.01px;top:118px;width:1px;height:12px;background:#3c3c3c;"></div>
<div class="a t" style="left:780.51px;top:115.1px;height:17px;line-height:17px;font-size:8.4px;color:#c4c4c4;width:16.105px;text-align:center;letter-spacing:-0.2px;transform:scaleX(0.9);">AL</div>
<div class="a " style="left:793.12px;top:118px;width:1px;height:12px;background:#3c3c3c;"></div>
<div class="a t" style="left:790.62px;top:115.1px;height:17px;line-height:17px;font-size:8.4px;color:#c4c4c4;width:16.105px;text-align:center;letter-spacing:-0.2px;transform:scaleX(0.9);">AM</div>
<div class="a " style="left:803.22px;top:118px;width:1px;height:12px;background:#3c3c3c;"></div>
<div class="a t" style="left:800.72px;top:115.1px;height:17px;line-height:17px;font-size:8.4px;color:#c4c4c4;width:16.105px;text-align:center;letter-spacing:-0.2px;transform:scaleX(0.9);">AN</div>
<div class="a " style="left:813.33px;top:118px;width:1px;height:12px;background:#3c3c3c;"></div>
<div class="a t" style="left:810.83px;top:115.1px;height:17px;line-height:17px;font-size:8.4px;color:#c4c4c4;width:16.105px;text-align:center;letter-spacing:-0.2px;transform:scaleX(0.9);">AO</div>
<div class="a " style="left:823.43px;top:118px;width:1px;height:12px;background:#3c3c3c;"></div>
<div class="a t" style="left:820.93px;top:115.1px;height:17px;line-height:17px;font-size:8.4px;color:#c4c4c4;width:16.105px;text-align:center;letter-spacing:-0.2px;transform:scaleX(0.9);">AP</div>
<div class="a " style="left:833.54px;top:118px;width:1px;height:12px;background:#3c3c3c;"></div>
<div class="a t" style="left:831.04px;top:115.1px;height:17px;line-height:17px;font-size:8.4px;color:#c4c4c4;width:16.105px;text-align:center;letter-spacing:-0.2px;transform:scaleX(0.9);">AQ</div>
<div class="a " style="left:843.64px;top:118px;width:1px;height:12px;background:#3c3c3c;"></div>
<div class="a t" style="left:841.14px;top:115.1px;height:17px;line-height:17px;font-size:8.4px;color:#c4c4c4;width:16.105px;text-align:center;letter-spacing:-0.2px;transform:scaleX(0.9);">AR</div>
<div class="a " style="left:853.75px;top:118px;width:1px;height:12px;background:#3c3c3c;"></div>
<div class="a t" style="left:851.25px;top:115.1px;height:17px;line-height:17px;font-size:8.4px;color:#c4c4c4;width:16.105px;text-align:center;letter-spacing:-0.2px;transform:scaleX(0.9);">AS</div>
<div class="a " style="left:863.85px;top:118px;width:1px;height:12px;background:#3c3c3c;"></div>
<div class="a t" style="left:861.35px;top:115.1px;height:17px;line-height:17px;font-size:8.4px;color:#c4c4c4;width:16.105px;text-align:center;letter-spacing:-0.2px;transform:scaleX(0.9);">AT</div>
<div class="a " style="left:873.96px;top:118px;width:1px;height:12px;background:#3c3c3c;"></div>
<div class="a t" style="left:871.46px;top:115.1px;height:17px;line-height:17px;font-size:8.4px;color:#c4c4c4;width:16.105px;text-align:center;letter-spacing:-0.2px;transform:scaleX(0.9);">AU</div>
<div class="a " style="left:884.06px;top:118px;width:1px;height:12px;background:#3c3c3c;"></div>
<div class="a t" style="left:881.56px;top:115.1px;height:17px;line-height:17px;font-size:8.4px;color:#c4c4c4;width:16.105px;text-align:center;letter-spacing:-0.2px;transform:scaleX(0.9);">AV</div>
<div class="a " style="left:894.17px;top:118px;width:1px;height:12px;background:#3c3c3c;"></div>
<div class="a t" style="left:891.67px;top:115.1px;height:17px;line-height:17px;font-size:8.4px;color:#c4c4c4;width:16.105px;text-align:center;letter-spacing:-0.2px;transform:scaleX(0.9);">AW</div>
<div class="a " style="left:904.27px;top:118px;width:1px;height:12px;background:#3c3c3c;"></div>
<div class="a t" style="left:901.77px;top:115.1px;height:17px;line-height:17px;font-size:8.4px;color:#c4c4c4;width:16.105px;text-align:center;letter-spacing:-0.2px;transform:scaleX(0.9);">AX</div>
<div class="a " style="left:914.38px;top:118px;width:1px;height:12px;background:#3c3c3c;"></div>
<div class="a t" style="left:911.88px;top:115.1px;height:17px;line-height:17px;font-size:8.4px;color:#c4c4c4;width:16.105px;text-align:center;letter-spacing:-0.2px;transform:scaleX(0.9);">AY</div>
<div class="a " style="left:924.48px;top:118px;width:1px;height:12px;background:#3c3c3c;"></div>
<div class="a t" style="left:921.98px;top:115.1px;height:17px;line-height:17px;font-size:8.4px;color:#c4c4c4;width:16.105px;text-align:center;letter-spacing:-0.2px;transform:scaleX(0.9);">AZ</div>
<div class="a " style="left:934.59px;top:118px;width:1px;height:12px;background:#3c3c3c;"></div>
<div class="a t" style="left:932.09px;top:115.1px;height:17px;line-height:17px;font-size:8.4px;color:#c4c4c4;width:16.105px;text-align:center;letter-spacing:-0.2px;transform:scaleX(0.9);">BA</div>
<div class="a " style="left:944.69px;top:118px;width:1px;height:12px;background:#3c3c3c;"></div>
<div class="a t" style="left:942.19px;top:115.1px;height:17px;line-height:17px;font-size:8.4px;color:#c4c4c4;width:16.105px;text-align:center;letter-spacing:-0.2px;transform:scaleX(0.9);">BB</div>
<div class="a " style="left:954.8px;top:118px;width:1px;height:12px;background:#3c3c3c;"></div>
<div class="a t" style="left:956px;top:115.1px;height:17px;line-height:17px;font-size:8.4px;color:#c4c4c4;width:39px;text-align:center;transform:scaleX(0.88);">BC</div>
<div class="a " style="left:994.5px;top:118px;width:1px;height:12px;background:#4a4a4a;"></div>
<div class="a t" style="left:1007.5px;top:115.1px;height:17px;line-height:17px;font-size:8.4px;color:#c4c4c4;transform:scaleX(0.88);transform-origin:0 50%;">B</div>
<div class="a t" style="left:27px;top:128.45px;height:17px;line-height:17px;font-size:8.6px;color:#c8c8c8;width:16px;text-align:center;">1</div>
<div class="a " style="left:27px;top:143.0px;width:16px;height:1px;background:#3a3a3a;"></div>
<div class="a t" style="left:27px;top:145.7px;height:17px;line-height:17px;font-size:8.6px;color:#c8c8c8;width:16px;text-align:center;">2</div>
<div class="a " style="left:27px;top:164.0px;width:16px;height:1px;background:#3a3a3a;"></div>
<div class="a t" style="left:27px;top:162.6px;height:17px;line-height:17px;font-size:8.6px;color:#c8c8c8;width:16px;text-align:center;">3</div>
<div class="a " style="left:27px;top:176.8px;width:16px;height:1px;background:#3a3a3a;"></div>
<div class="a t" style="left:27px;top:175.5px;height:17px;line-height:17px;font-size:8.6px;color:#c8c8c8;width:16px;text-align:center;">4</div>
<div class="a " style="left:27px;top:189.8px;width:16px;height:1px;background:#3a3a3a;"></div>
<div class="a t" style="left:27px;top:187.6px;height:17px;line-height:17px;font-size:8.6px;color:#c8c8c8;width:16px;text-align:center;">5</div>
<div class="a " style="left:27px;top:201.0px;width:16px;height:1px;background:#3a3a3a;"></div>
<div class="a t" style="left:27px;top:199.6px;height:17px;line-height:17px;font-size:8.6px;color:#c8c8c8;width:16px;text-align:center;">6</div>
<div class="a " style="left:27px;top:213.8px;width:16px;height:1px;background:#3a3a3a;"></div>
<div class="a t" style="left:27px;top:212.94px;height:17px;line-height:17px;font-size:8.6px;color:#c8c8c8;width:16px;text-align:center;">7</div>
<div class="a " style="left:27px;top:227.67px;width:16px;height:1px;background:#3a3a3a;"></div>
<div class="a t" style="left:27px;top:226.49px;height:17px;line-height:17px;font-size:8.6px;color:#c8c8c8;width:16px;text-align:center;">8</div>
<div class="a " style="left:27px;top:240.915px;width:16px;height:1px;background:#3a3a3a;"></div>
<div class="a t" style="left:27px;top:239.74px;height:17px;line-height:17px;font-size:8.6px;color:#c8c8c8;width:16px;text-align:center;">9</div>
<div class="a " style="left:27px;top:254.16px;width:16px;height:1px;background:#3a3a3a;"></div>
<div class="a t" style="left:27px;top:252.98px;height:17px;line-height:17px;font-size:8.6px;color:#c8c8c8;width:16px;text-align:center;">10</div>
<div class="a " style="left:27px;top:267.405px;width:16px;height:1px;background:#3a3a3a;"></div>
<div class="a t" style="left:27px;top:266.23px;height:17px;line-height:17px;font-size:8.6px;color:#c8c8c8;width:16px;text-align:center;">11</div>
<div class="a " style="left:27px;top:280.65px;width:16px;height:1px;background:#3a3a3a;"></div>
<div class="a t" style="left:27px;top:279.47px;height:17px;line-height:17px;font-size:8.6px;color:#c8c8c8;width:16px;text-align:center;">12</div>
<div class="a " style="left:27px;top:293.895px;width:16px;height:1px;background:#3a3a3a;"></div>
<div class="a t" style="left:27px;top:292.72px;height:17px;line-height:17px;font-size:8.6px;color:#c8c8c8;width:16px;text-align:center;">13</div>
<div class="a " style="left:27px;top:307.14px;width:16px;height:1px;background:#3a3a3a;"></div>
<div class="a t" style="left:27px;top:305.96px;height:17px;line-height:17px;font-size:8.6px;color:#c8c8c8;width:16px;text-align:center;">14</div>
<div class="a " style="left:27px;top:320.385px;width:16px;height:1px;background:#3a3a3a;"></div>
<div class="a t" style="left:27px;top:319.21px;height:17px;line-height:17px;font-size:8.6px;color:#c8c8c8;width:16px;text-align:center;">15</div>
<div class="a " style="left:27px;top:333.63px;width:16px;height:1px;background:#3a3a3a;"></div>
<div class="a t" style="left:27px;top:332.45px;height:17px;line-height:17px;font-size:8.6px;color:#c8c8c8;width:16px;text-align:center;">16</div>
<div class="a " style="left:27px;top:346.875px;width:16px;height:1px;background:#3a3a3a;"></div>
<div class="a t" style="left:27px;top:345.7px;height:17px;line-height:17px;font-size:8.6px;color:#c8c8c8;width:16px;text-align:center;">17</div>
<div class="a " style="left:27px;top:360.12px;width:16px;height:1px;background:#3a3a3a;"></div>
<div class="a t" style="left:27px;top:358.94px;height:17px;line-height:17px;font-size:8.6px;color:#c8c8c8;width:16px;text-align:center;">18</div>
<div class="a " style="left:27px;top:373.365px;width:16px;height:1px;background:#3a3a3a;"></div>
<div class="a t" style="left:27px;top:372.19px;height:17px;line-height:17px;font-size:8.6px;color:#c8c8c8;width:16px;text-align:center;">19</div>
<div class="a " style="left:27px;top:386.61px;width:16px;height:1px;background:#3a3a3a;"></div>
<div class="a t" style="left:27px;top:385.43px;height:17px;line-height:17px;font-size:8.6px;color:#c8c8c8;width:16px;text-align:center;">20</div>
<div class="a " style="left:27px;top:399.855px;width:16px;height:1px;background:#3a3a3a;"></div>
<div class="a t" style="left:27px;top:398.68px;height:17px;line-height:17px;font-size:8.6px;color:#c8c8c8;width:16px;text-align:center;">21</div>
<div class="a " style="left:27px;top:413.09999999999997px;width:16px;height:1px;background:#3a3a3a;"></div>
<div class="a t" style="left:27px;top:411.92px;height:17px;line-height:17px;font-size:8.6px;color:#c8c8c8;width:16px;text-align:center;">22</div>
<div class="a " style="left:27px;top:426.34499999999997px;width:16px;height:1px;background:#3a3a3a;"></div>
<div class="a t" style="left:27px;top:425.17px;height:17px;line-height:17px;font-size:8.6px;color:#c8c8c8;width:16px;text-align:center;">23</div>
<div class="a " style="left:27px;top:439.59px;width:16px;height:1px;background:#3a3a3a;"></div>
<div class="a t" style="left:27px;top:438.41px;height:17px;line-height:17px;font-size:8.6px;color:#c8c8c8;width:16px;text-align:center;">24</div>
<div class="a " style="left:27px;top:452.835px;width:16px;height:1px;background:#3a3a3a;"></div>
<div class="a t" style="left:27px;top:451.66px;height:17px;line-height:17px;font-size:8.6px;color:#c8c8c8;width:16px;text-align:center;">25</div>
<div class="a " style="left:27px;top:466.08px;width:16px;height:1px;background:#3a3a3a;"></div>
<div class="a t" style="left:27px;top:464.9px;height:17px;line-height:17px;font-size:8.6px;color:#c8c8c8;width:16px;text-align:center;">26</div>
<div class="a " style="left:27px;top:479.32499999999993px;width:16px;height:1px;background:#3a3a3a;"></div>
<div class="a t" style="left:27px;top:478.15px;height:17px;line-height:17px;font-size:8.6px;color:#c8c8c8;width:16px;text-align:center;">27</div>
<div class="a " style="left:27px;top:492.56999999999994px;width:16px;height:1px;background:#3a3a3a;"></div>
<div class="a t" style="left:27px;top:491.39px;height:17px;line-height:17px;font-size:8.6px;color:#c8c8c8;width:16px;text-align:center;">28</div>
<div class="a " style="left:27px;top:505.81499999999994px;width:16px;height:1px;background:#3a3a3a;"></div>
<div class="a t" style="left:27px;top:504.64px;height:17px;line-height:17px;font-size:8.6px;color:#c8c8c8;width:16px;text-align:center;">29</div>
<div class="a " style="left:27px;top:519.06px;width:16px;height:1px;background:#3a3a3a;"></div>
<div class="a t" style="left:27px;top:518.53px;height:17px;line-height:17px;font-size:8.6px;color:#c8c8c8;width:16px;text-align:center;">30</div>
<div class="a " style="left:27px;top:533.6049999999999px;width:16px;height:1px;background:#3a3a3a;"></div>
<div class="a t" style="left:27px;top:532.43px;height:17px;line-height:17px;font-size:8.6px;color:#c8c8c8;width:16px;text-align:center;">31</div>
<div class="a " style="left:27px;top:546.8499999999999px;width:16px;height:1px;background:#3a3a3a;"></div>
<div class="a t" style="left:27px;top:545.67px;height:17px;line-height:17px;font-size:8.6px;color:#c8c8c8;width:16px;text-align:center;">32</div>
<div class="a " style="left:27px;top:560.0949999999999px;width:16px;height:1px;background:#3a3a3a;"></div>
<div class="a t" style="left:27px;top:558.92px;height:17px;line-height:17px;font-size:8.6px;color:#c8c8c8;width:16px;text-align:center;">33</div>
<div class="a " style="left:27px;top:573.3399999999999px;width:16px;height:1px;background:#3a3a3a;"></div>
<div class="a " style="left:5.6px;top:256.26px;width:0.9px;height:58.0025px;background:#9a9a9a;"></div>
<div class="a " style="left:5.6px;top:256.26px;width:3.2px;height:0.9px;background:#9a9a9a;"></div>
<div class="a " style="left:17.8px;top:260.78249999999997px;width:1.1px;height:1.1px;background:#9a9a9a;"></div>
<div class="a " style="left:17.8px;top:274.0275px;width:1.1px;height:1.1px;background:#9a9a9a;"></div>
<div class="a " style="left:17.8px;top:287.2725px;width:1.1px;height:1.1px;background:#9a9a9a;"></div>
<div class="a " style="left:17.8px;top:300.5175px;width:1.1px;height:1.1px;background:#9a9a9a;"></div>
<div class="a " style="left:0.8px;top:308.26px;width:12px;height:12px;background:#e2e2e2;border:0.6px solid #bdbdbd;"></div>
<div class="a " style="left:4.6px;top:313.86px;width:4.4px;height:0.9px;background:#555;"></div>
<div class="a " style="left:5.6px;top:322.485px;width:0.9px;height:58.0025px;background:#9a9a9a;"></div>
<div class="a " style="left:5.6px;top:322.485px;width:3.2px;height:0.9px;background:#9a9a9a;"></div>
<div class="a " style="left:17.8px;top:327.0075px;width:1.1px;height:1.1px;background:#9a9a9a;"></div>
<div class="a " style="left:17.8px;top:340.2525px;width:1.1px;height:1.1px;background:#9a9a9a;"></div>
<div class="a " style="left:17.8px;top:353.4975px;width:1.1px;height:1.1px;background:#9a9a9a;"></div>
<div class="a " style="left:17.8px;top:366.7425px;width:1.1px;height:1.1px;background:#9a9a9a;"></div>
<div class="a " style="left:0.8px;top:374.49px;width:12px;height:12px;background:#e2e2e2;border:0.6px solid #bdbdbd;"></div>
<div class="a " style="left:4.6px;top:380.09px;width:4.4px;height:0.9px;background:#555;"></div>
<div class="a " style="left:5.6px;top:388.71000000000004px;width:0.9px;height:58.00249999999994px;background:#9a9a9a;"></div>
<div class="a " style="left:5.6px;top:388.71000000000004px;width:3.2px;height:0.9px;background:#9a9a9a;"></div>
<div class="a " style="left:17.8px;top:393.2325px;width:1.1px;height:1.1px;background:#9a9a9a;"></div>
<div class="a " style="left:17.8px;top:406.47749999999996px;width:1.1px;height:1.1px;background:#9a9a9a;"></div>
<div class="a " style="left:17.8px;top:419.72249999999997px;width:1.1px;height:1.1px;background:#9a9a9a;"></div>
<div class="a " style="left:17.8px;top:432.9675px;width:1.1px;height:1.1px;background:#9a9a9a;"></div>
<div class="a " style="left:0.8px;top:440.71px;width:12px;height:12px;background:#e2e2e2;border:0.6px solid #bdbdbd;"></div>
<div class="a " style="left:4.6px;top:446.31px;width:4.4px;height:0.9px;background:#555;"></div>
<div class="a " style="left:5.6px;top:454.935px;width:0.9px;height:58.0025px;background:#9a9a9a;"></div>
<div class="a " style="left:5.6px;top:454.935px;width:3.2px;height:0.9px;background:#9a9a9a;"></div>
<div class="a " style="left:17.8px;top:459.4575px;width:1.1px;height:1.1px;background:#9a9a9a;"></div>
<div class="a " style="left:17.8px;top:472.7025px;width:1.1px;height:1.1px;background:#9a9a9a;"></div>
<div class="a " style="left:17.8px;top:485.94749999999993px;width:1.1px;height:1.1px;background:#9a9a9a;"></div>
<div class="a " style="left:17.8px;top:499.19249999999994px;width:1.1px;height:1.1px;background:#9a9a9a;"></div>
<div class="a " style="left:0.8px;top:506.94px;width:12px;height:12px;background:#e2e2e2;border:0.6px solid #bdbdbd;"></div>
<div class="a " style="left:4.6px;top:512.54px;width:4.4px;height:0.9px;background:#555;"></div>
<div class="a t" style="left:65px;top:141.4px;height:24px;line-height:24px;font-size:12.2px;color:#17204a;font-weight:bold;letter-spacing:1.201px;">バルセロナ広報活動</div>
<div class="a t" style="left:65px;top:177.2px;height:14px;line-height:14px;font-size:6.8px;color:#17204a;font-weight:bold;letter-spacing:0.936px;">作成者</div>
<div class="a t" style="left:161px;top:177.2px;height:14px;line-height:14px;font-size:7.2px;color:#6a6a6a;letter-spacing:0.848px;">リオネル・メッシ</div>
<div class="a t" style="left:65px;top:188.2px;height:14px;line-height:14px;font-size:6.8px;color:#17204a;font-weight:bold;letter-spacing:1.114px;">プロジェクト開始日</div>
<div class="a t" style="left:161px;top:188.2px;height:14px;line-height:14px;font-size:7px;color:#6a6a6a;letter-spacing:0.221px;"><span class="d">2021</span>年<span class="d">6</span>月<span class="d">15</span>日</div>
<div class="a " style="left:62.5px;top:228px;width:500px;height:13.21px;background:#2ba866;"></div>
<div class="a t" style="left:62.5px;top:227.99px;height:14px;line-height:14px;font-size:6.8px;color:#fff;font-weight:bold;width:89.5px;text-align:center;letter-spacing:1.036px;">タスク</div>
<div class="a t" style="left:160px;top:227.99px;height:14px;line-height:14px;font-size:6.8px;color:#fff;font-weight:bold;width:103.7px;text-align:center;letter-spacing:1.370px;">担当者</div>
<div class="a t" style="left:263.7px;top:227.99px;height:14px;line-height:14px;font-size:6.8px;color:#fff;font-weight:bold;width:58.3px;text-align:center;letter-spacing:1.370px;">進捗率</div>
<div class="a " style="left:62.5px;top:254.16px;width:500px;height:1px;background:#f0f0f0;"></div>
<div class="a " style="left:62.5px;top:267.405px;width:500px;height:1px;background:#f0f0f0;"></div>
<div class="a " style="left:62.5px;top:280.65px;width:500px;height:1px;background:#f0f0f0;"></div>
<div class="a " style="left:62.5px;top:293.895px;width:500px;height:1px;background:#f0f0f0;"></div>
<div class="a " style="left:62.5px;top:307.14px;width:500px;height:1px;background:#f0f0f0;"></div>
<div class="a " style="left:62.5px;top:320.385px;width:500px;height:1px;background:#f0f0f0;"></div>
<div class="a " style="left:62.5px;top:333.63px;width:500px;height:1px;background:#f0f0f0;"></div>
<div class="a " style="left:62.5px;top:346.875px;width:500px;height:1px;background:#f0f0f0;"></div>
<div class="a " style="left:62.5px;top:360.12px;width:500px;height:1px;background:#f0f0f0;"></div>
<div class="a " style="left:62.5px;top:373.365px;width:500px;height:1px;background:#f0f0f0;"></div>
<div class="a " style="left:62.5px;top:386.61px;width:500px;height:1px;background:#f0f0f0;"></div>
<div class="a " style="left:62.5px;top:399.855px;width:500px;height:1px;background:#f0f0f0;"></div>
<div class="a " style="left:62.5px;top:413.09999999999997px;width:500px;height:1px;background:#f0f0f0;"></div>
<div class="a " style="left:62.5px;top:426.34499999999997px;width:500px;height:1px;background:#f0f0f0;"></div>
<div class="a " style="left:62.5px;top:439.59px;width:500px;height:1px;background:#f0f0f0;"></div>
<div class="a " style="left:62.5px;top:452.835px;width:500px;height:1px;background:#f0f0f0;"></div>
<div class="a " style="left:62.5px;top:466.08px;width:500px;height:1px;background:#f0f0f0;"></div>
<div class="a " style="left:62.5px;top:479.32499999999993px;width:500px;height:1px;background:#f0f0f0;"></div>
<div class="a " style="left:62.5px;top:492.56999999999994px;width:500px;height:1px;background:#f0f0f0;"></div>
<div class="a " style="left:62.5px;top:505.81499999999994px;width:500px;height:1px;background:#f0f0f0;"></div>
<div class="a t" style="left:71px;top:240.74px;height:15px;line-height:15px;font-size:7.3px;color:#555;letter-spacing:0.536px;">ステージ <span class="d">1</span></div>
<div class="a t" style="left:71px;top:306.96px;height:15px;line-height:15px;font-size:7.3px;color:#555;letter-spacing:0.536px;">ステージ <span class="d">2</span></div>
<div class="a t" style="left:71px;top:373.19px;height:15px;line-height:15px;font-size:7.3px;color:#555;letter-spacing:0.536px;">ステージ <span class="d">3</span></div>
<div class="a t" style="left:71px;top:439.41px;height:15px;line-height:15px;font-size:7.3px;color:#555;letter-spacing:0.536px;">ステージ <span class="d">4</span></div>
<div class="a t" style="left:78px;top:253.98px;height:15px;line-height:15px;font-size:7.3px;color:#555;letter-spacing:0.045px;">タスク <span class="d">1.1</span></div>
<div class="a " style="left:151px;top:255.26px;width:9.2px;height:12.045px;background:#17204a;"></div>
<div class="a " style="left:263.7px;top:255.46px;width:29.15px;height:11.645px;background:#bfbfbf;"></div>
<div class="a t" style="left:168.5px;top:253.98px;height:15px;line-height:15px;font-size:7.3px;color:#555;letter-spacing:0.603px;">リオネル・メッシ</div>
<div class="a t" style="left:271px;top:252.48px;height:18px;line-height:18px;font-size:8.8px;color:#555;width:30.5px;text-align:right;transform:scaleX(0.9);transform-origin:100% 50%;">50%</div>
<div class="a t" style="left:78px;top:267.23px;height:15px;line-height:15px;font-size:7.3px;color:#555;letter-spacing:0.045px;">タスク <span class="d">1.2</span></div>
<div class="a " style="left:151px;top:268.505px;width:9.2px;height:12.045px;background:#ffcb5c;"></div>
<div class="a " style="left:263.7px;top:268.705px;width:23.32px;height:11.645px;background:#bfbfbf;"></div>
<div class="a t" style="left:168.5px;top:267.23px;height:15px;line-height:15px;font-size:7.3px;color:#555;letter-spacing:0.270px;">ペドリ</div>
<div class="a t" style="left:271px;top:265.73px;height:18px;line-height:18px;font-size:8.8px;color:#555;width:30.5px;text-align:right;transform:scaleX(0.9);transform-origin:100% 50%;">40%</div>
<div class="a t" style="left:78px;top:280.47px;height:15px;line-height:15px;font-size:7.3px;color:#555;letter-spacing:0.045px;">タスク <span class="d">1.3</span></div>
<div class="a " style="left:151px;top:281.75px;width:9.2px;height:12.045px;background:#ff1a80;"></div>
<div class="a " style="left:263.7px;top:281.95px;width:17.49px;height:11.645px;background:#bfbfbf;"></div>
<div class="a t" style="left:168.5px;top:280.47px;height:15px;line-height:15px;font-size:7.3px;color:#555;letter-spacing:0.585px;">フレンキー・デ・ヨング</div>
<div class="a t" style="left:271px;top:278.97px;height:18px;line-height:18px;font-size:8.8px;color:#555;width:30.5px;text-align:right;transform:scaleX(0.9);transform-origin:100% 50%;">30%</div>
<div class="a t" style="left:78px;top:293.72px;height:15px;line-height:15px;font-size:7.3px;color:#555;letter-spacing:0.045px;">タスク <span class="d">1.4</span></div>
<div class="a " style="left:151px;top:294.995px;width:9.2px;height:12.045px;background:#3ed598;"></div>
<div class="a " style="left:263.7px;top:295.195px;width:46.64px;height:11.645px;background:#bfbfbf;"></div>
<div class="a" style="left:168.5px;top:294.395px;width:95px;height:13.245px;overflow:hidden;">
<div class="a t" style="left:0px;top:-0.68px;height:15px;line-height:15px;font-size:7.3px;color:#555;letter-spacing:0.657px;">アントワーヌ・グリエーズマン</div>
</div>
<div class="a t" style="left:271px;top:292.22px;height:18px;line-height:18px;font-size:8.8px;color:#555;width:30.5px;text-align:right;transform:scaleX(0.9);transform-origin:100% 50%;">80%</div>
<div class="a t" style="left:78px;top:320.21px;height:15px;line-height:15px;font-size:7.3px;color:#555;letter-spacing:0.045px;">タスク <span class="d">2.1</span></div>
<div class="a " style="left:151px;top:321.485px;width:9.2px;height:12.045px;background:#8e44ad;"></div>
<div class="a " style="left:263.7px;top:321.685px;width:46.64px;height:11.645px;background:#bfbfbf;"></div>
<div class="a t" style="left:168.5px;top:320.21px;height:15px;line-height:15px;font-size:7.3px;color:#555;letter-spacing:0.623px;">ジョルディ・アルバ</div>
<div class="a t" style="left:271px;top:318.71px;height:18px;line-height:18px;font-size:8.8px;color:#555;width:30.5px;text-align:right;transform:scaleX(0.9);transform-origin:100% 50%;">80%</div>
<div class="a t" style="left:78px;top:333.45px;height:15px;line-height:15px;font-size:7.3px;color:#555;letter-spacing:0.045px;">タスク <span class="d">2.2</span></div>
<div class="a " style="left:151px;top:334.73px;width:9.2px;height:12.045px;background:#ff5c93;"></div>
<div class="a t" style="left:168.5px;top:333.45px;height:15px;line-height:15px;font-size:7.3px;color:#555;letter-spacing:0.650px;">アンス・ファティ</div>
<div class="a t" style="left:271px;top:331.95px;height:18px;line-height:18px;font-size:8.8px;color:#555;width:30.5px;text-align:right;transform:scaleX(0.9);transform-origin:100% 50%;">0%</div>
<div class="a t" style="left:78px;top:346.7px;height:15px;line-height:15px;font-size:7.3px;color:#555;letter-spacing:0.045px;">タスク <span class="d">2.3</span></div>
<div class="a " style="left:151px;top:347.975px;width:9.2px;height:12.045px;background:#6fe0f0;"></div>
<div class="a t" style="left:168.5px;top:346.7px;height:15px;line-height:15px;font-size:7.3px;color:#555;letter-spacing:0.603px;">ジェラール・ピケ</div>
<div class="a t" style="left:271px;top:345.2px;height:18px;line-height:18px;font-size:8.8px;color:#555;width:30.5px;text-align:right;transform:scaleX(0.9);transform-origin:100% 50%;">0%</div>
<div class="a t" style="left:78px;top:359.94px;height:15px;line-height:15px;font-size:7.3px;color:#555;letter-spacing:0.045px;">タスク <span class="d">2.4</span></div>
<div class="a " style="left:151px;top:361.22px;width:9.2px;height:12.045px;background:#6a5af0;"></div>
<div class="a t" style="left:168.5px;top:359.94px;height:15px;line-height:15px;font-size:7.3px;color:#555;letter-spacing:0.559px;">テア・シュテーゲン</div>
<div class="a t" style="left:271px;top:358.44px;height:18px;line-height:18px;font-size:8.8px;color:#555;width:30.5px;text-align:right;transform:scaleX(0.9);transform-origin:100% 50%;">0%</div>
<div class="a t" style="left:78px;top:386.43px;height:15px;line-height:15px;font-size:7.3px;color:#555;letter-spacing:0.045px;">タスク <span class="d">3.1</span></div>
<div class="a " style="left:151px;top:387.71000000000004px;width:9.2px;height:12.045px;background:#8e44ad;"></div>
<div class="a " style="left:263.7px;top:387.91px;width:11.66px;height:11.645px;background:#bfbfbf;"></div>
<div class="a t" style="left:168.5px;top:386.43px;height:15px;line-height:15px;font-size:7.3px;color:#555;letter-spacing:0.623px;">ジョルディ・アルバ</div>
<div class="a t" style="left:271px;top:384.93px;height:18px;line-height:18px;font-size:8.8px;color:#555;width:30.5px;text-align:right;transform:scaleX(0.9);transform-origin:100% 50%;">20%</div>
<div class="a t" style="left:78px;top:399.68px;height:15px;line-height:15px;font-size:7.3px;color:#555;letter-spacing:0.045px;">タスク <span class="d">3.2</span></div>
<div class="a " style="left:151px;top:400.95500000000004px;width:9.2px;height:12.045px;background:#ff5c93;"></div>
<div class="a t" style="left:168.5px;top:399.68px;height:15px;line-height:15px;font-size:7.3px;color:#555;letter-spacing:0.650px;">アンス・ファティ</div>
<div class="a t" style="left:271px;top:398.18px;height:18px;line-height:18px;font-size:8.8px;color:#555;width:30.5px;text-align:right;transform:scaleX(0.9);transform-origin:100% 50%;">0%</div>
<div class="a t" style="left:78px;top:412.92px;height:15px;line-height:15px;font-size:7.3px;color:#555;letter-spacing:0.045px;">タスク <span class="d">3.3</span></div>
<div class="a " style="left:151px;top:414.2px;width:9.2px;height:12.045px;background:#1e7145;"></div>
<div class="a t" style="left:168.5px;top:412.92px;height:15px;line-height:15px;font-size:7.3px;color:#555;letter-spacing:0.718px;">アグエロ</div>
<div class="a t" style="left:271px;top:411.42px;height:18px;line-height:18px;font-size:8.8px;color:#555;width:30.5px;text-align:right;transform:scaleX(0.9);transform-origin:100% 50%;">0%</div>
<div class="a t" style="left:78px;top:426.17px;height:15px;line-height:15px;font-size:7.3px;color:#555;letter-spacing:0.045px;">タスク <span class="d">3.4</span></div>
<div class="a " style="left:151px;top:427.445px;width:9.2px;height:12.045px;background:#1e7145;"></div>
<div class="a t" style="left:168.5px;top:426.17px;height:15px;line-height:15px;font-size:7.3px;color:#555;letter-spacing:0.718px;">アグエロ</div>
<div class="a t" style="left:271px;top:424.67px;height:18px;line-height:18px;font-size:8.8px;color:#555;width:30.5px;text-align:right;transform:scaleX(0.9);transform-origin:100% 50%;">0%</div>
<div class="a t" style="left:78px;top:452.66px;height:15px;line-height:15px;font-size:7.3px;color:#555;letter-spacing:0.045px;">タスク <span class="d">4.1</span></div>
<div class="a " style="left:151px;top:453.935px;width:9.2px;height:12.045px;background:#3ed598;"></div>
<div class="a " style="left:263.7px;top:454.135px;width:11.66px;height:11.645px;background:#bfbfbf;"></div>
<div class="a" style="left:168.5px;top:453.335px;width:95px;height:13.245px;overflow:hidden;">
<div class="a t" style="left:0px;top:-0.68px;height:15px;line-height:15px;font-size:7.3px;color:#555;letter-spacing:0.657px;">アントワーヌ・グリエーズマン</div>
</div>
<div class="a t" style="left:271px;top:451.16px;height:18px;line-height:18px;font-size:8.8px;color:#555;width:30.5px;text-align:right;transform:scaleX(0.9);transform-origin:100% 50%;">20%</div>
<div class="a t" style="left:78px;top:465.9px;height:15px;line-height:15px;font-size:7.3px;color:#555;letter-spacing:0.045px;">タスク <span class="d">4.2</span></div>
<div class="a " style="left:151px;top:467.18px;width:9.2px;height:12.045px;background:#cdf564;"></div>
<div class="a t" style="left:168.5px;top:465.9px;height:15px;line-height:15px;font-size:7.3px;color:#555;letter-spacing:0.583px;">ウスマン・デンベレ</div>
<div class="a t" style="left:271px;top:464.4px;height:18px;line-height:18px;font-size:8.8px;color:#555;width:30.5px;text-align:right;transform:scaleX(0.9);transform-origin:100% 50%;">0%</div>
<div class="a t" style="left:78px;top:479.15px;height:15px;line-height:15px;font-size:7.3px;color:#555;letter-spacing:0.045px;">タスク <span class="d">4.3</span></div>
<div class="a " style="left:151px;top:480.42499999999995px;width:9.2px;height:12.045px;background:#ff1a80;"></div>
<div class="a t" style="left:168.5px;top:479.15px;height:15px;line-height:15px;font-size:7.3px;color:#555;letter-spacing:0.585px;">フレンキー・デ・ヨング</div>
<div class="a t" style="left:271px;top:477.65px;height:18px;line-height:18px;font-size:8.8px;color:#555;width:30.5px;text-align:right;transform:scaleX(0.9);transform-origin:100% 50%;">0%</div>
<div class="a t" style="left:78px;top:492.39px;height:15px;line-height:15px;font-size:7.3px;color:#555;letter-spacing:0.045px;">タスク <span class="d">4.4</span></div>
<div class="a " style="left:151px;top:493.66999999999996px;width:9.2px;height:12.045px;background:#17204a;"></div>
<div class="a t" style="left:168.5px;top:492.39px;height:15px;line-height:15px;font-size:7.3px;color:#555;letter-spacing:0.603px;">リオネル・メッシ</div>
<div class="a t" style="left:271px;top:490.89px;height:18px;line-height:18px;font-size:8.8px;color:#555;width:30.5px;text-align:right;transform:scaleX(0.9);transform-origin:100% 50%;">0%</div>
<div class="a t" style="left:334px;top:425.17px;height:17px;line-height:17px;font-size:8.6px;color:#555;width:20px;text-align:center;transform:scaleX(0.92);">7</div>
<div class="a t" style="left:369px;top:426.17px;height:15px;line-height:15px;font-size:7.3px;color:#555;width:40px;text-align:center;"><span class="d">7</span>月<span class="d">20</span>日</div>
<div class="a t" style="left:456.5px;top:426.17px;height:15px;line-height:15px;font-size:7.3px;color:#555;width:40px;text-align:center;"><span class="d">7</span>月<span class="d">30</span>日</div>
<div class="a t" style="left:334px;top:451.66px;height:17px;line-height:17px;font-size:8.6px;color:#555;width:20px;text-align:center;transform:scaleX(0.92);">8</div>
<div class="a t" style="left:369px;top:452.66px;height:15px;line-height:15px;font-size:7.3px;color:#999;width:40px;text-align:center;"><span class="d">8</span>月<span class="d">2</span>日</div>
<div class="a t" style="left:413px;top:455.16px;height:10px;line-height:10px;font-size:5px;color:#aaa;width:40px;text-align:center;">タスク 3.4</div>
<div class="a t" style="left:456.5px;top:452.66px;height:15px;line-height:15px;font-size:7.3px;color:#555;width:40px;text-align:center;"><span class="d">8</span>月<span class="d">11</span>日</div>
<div class="a t" style="left:334px;top:464.9px;height:17px;line-height:17px;font-size:8.6px;color:#555;width:20px;text-align:center;transform:scaleX(0.92);">6</div>
<div class="a t" style="left:369px;top:465.9px;height:15px;line-height:15px;font-size:7.3px;color:#999;width:40px;text-align:center;"><span class="d">8</span>月<span class="d">12</span>日</div>
<div class="a t" style="left:413px;top:468.4px;height:10px;line-height:10px;font-size:5px;color:#aaa;width:40px;text-align:center;">タスク 4.1</div>
<div class="a t" style="left:456.5px;top:465.9px;height:15px;line-height:15px;font-size:7.3px;color:#555;width:40px;text-align:center;"><span class="d">8</span>月<span class="d">19</span>日</div>
<div class="a t" style="left:334px;top:478.15px;height:17px;line-height:17px;font-size:8.6px;color:#555;width:20px;text-align:center;transform:scaleX(0.92);">15</div>
<div class="a t" style="left:369px;top:479.15px;height:15px;line-height:15px;font-size:7.3px;color:#999;width:40px;text-align:center;"><span class="d">8</span>月<span class="d">13</span>日</div>
<div class="a t" style="left:413px;top:481.65px;height:10px;line-height:10px;font-size:5px;color:#aaa;width:40px;text-align:center;">タスク 4.2</div>
<div class="a t" style="left:456.5px;top:479.15px;height:15px;line-height:15px;font-size:7.3px;color:#555;width:40px;text-align:center;"><span class="d">9</span>月<span class="d">2</span>日</div>
<div class="a t" style="left:334px;top:491.39px;height:17px;line-height:17px;font-size:8.6px;color:#555;width:20px;text-align:center;transform:scaleX(0.92);">7</div>
<div class="a t" style="left:369px;top:492.39px;height:15px;line-height:15px;font-size:7.3px;color:#555;width:40px;text-align:center;"><span class="d">9</span>月<span class="d">20</span>日</div>
<div class="a t" style="left:456.5px;top:492.39px;height:15px;line-height:15px;font-size:7.3px;color:#555;width:40px;text-align:center;"><span class="d">9</span>月<span class="d">28</span>日</div>
<div class="a t" style="left:633px;top:149.8px;height:13px;line-height:13px;font-size:6.4px;color:#17204a;font-weight:bold;transform:scaleX(1.048);transform-origin:0 50%;">工程の関連</div>
<div class="a t" style="left:714px;top:150.8px;height:11px;line-height:11px;font-size:5.6px;color:#666;transform:scaleX(1.047);transform-origin:0 50%;">=WORKDAY.INTL(CELL_REF,DAYS,weekend,holidays)</div>
<div class="a " style="left:901.8px;top:142.8px;width:54.4px;height:21.6px;background:#17204a;border-radius:3px;"></div>
<svg style="left:910.5px;top:146.5px;" width="14" height="14" viewBox="0 0 14 14"><g transform="translate(7,7)"><g fill="#fff"><rect x="-1.8" y="-7.4" width="3.6" height="4" rx="1" transform="rotate(0)"/><rect x="-1.8" y="-7.4" width="3.6" height="4" rx="1" transform="rotate(45)"/><rect x="-1.8" y="-7.4" width="3.6" height="4" rx="1" transform="rotate(90)"/><rect x="-1.8" y="-7.4" width="3.6" height="4" rx="1" transform="rotate(135)"/><rect x="-1.8" y="-7.4" width="3.6" height="4" rx="1" transform="rotate(180)"/><rect x="-1.8" y="-7.4" width="3.6" height="4" rx="1" transform="rotate(225)"/><rect x="-1.8" y="-7.4" width="3.6" height="4" rx="1" transform="rotate(270)"/><rect x="-1.8" y="-7.4" width="3.6" height="4" rx="1" transform="rotate(315)"/></g><circle r="5.4" fill="#fff"/><circle r="2.7" fill="#17204a"/></g></svg>
<div class="a t" style="left:933.3px;top:145.8px;height:16px;line-height:16px;font-size:8px;color:#fff;font-weight:bold;transform:scaleX(1.075);transform-origin:0 50%;">設定</div>
<div class="a " style="left:560px;top:177.3px;width:143px;height:12.6px;background:#e9e9e9;"></div>
<div class="a t" style="left:693px;top:174.9px;height:17px;line-height:17px;font-size:8.5px;color:#333;font-weight:bold;transform:scaleX(1.208);transform-origin:0 50%;">></div>
<div class="a " style="left:561.2px;top:190.8px;width:394.0999999999999px;height:37.0px;background:#f2f2f2;"></div>
<div class="a " style="left:561.2px;top:227.8px;width:394.0999999999999px;height:13.599999999999994px;background:#17204a;"></div>
<div class="a " style="left:561.2px;top:190.8px;width:10.209999999999999px;height:37.0px;background:#d6d6d6;"></div>
<div class="a " style="left:561.2px;top:227.8px;width:10.209999999999999px;height:13.599999999999994px;background:#6d7289;"></div>
<div class="a" style="left:561.2px;top:190.8px;width:10.11px;height:28.8px;"><div class="a r" style="color:#4e5266;">2021/6/19</div></div>
<div class="a t" style="left:561.2px;top:229.3px;height:11px;line-height:11px;font-size:5.6px;color:#fff;font-weight:bold;width:10.11px;text-align:center;">土</div>
<div class="a " style="left:571.31px;top:190.8px;width:10.2px;height:37.0px;background:#d6d6d6;"></div>
<div class="a " style="left:571.31px;top:227.8px;width:10.2px;height:13.599999999999994px;background:#6d7289;"></div>
<div class="a" style="left:571.31px;top:190.8px;width:10.1px;height:28.8px;"><div class="a r" style="color:#4e5266;">2021/6/20</div></div>
<div class="a t" style="left:571.31px;top:229.3px;height:11px;line-height:11px;font-size:5.6px;color:#fff;font-weight:bold;width:10.1px;text-align:center;">日</div>
<div class="a" style="left:581.41px;top:190.8px;width:10.11px;height:28.8px;"><div class="a r" style="color:#4e5266;">2021/6/21</div></div>
<div class="a t" style="left:581.41px;top:229.3px;height:11px;line-height:11px;font-size:5.6px;color:#fff;font-weight:bold;width:10.11px;text-align:center;">月</div>
<div class="a" style="left:591.52px;top:190.8px;width:10.1px;height:28.8px;"><div class="a r" style="color:#4e5266;">2021/6/22</div></div>
<div class="a t" style="left:591.52px;top:229.3px;height:11px;line-height:11px;font-size:5.6px;color:#fff;font-weight:bold;width:10.1px;text-align:center;">火</div>
<div class="a" style="left:601.62px;top:190.8px;width:10.11px;height:28.8px;"><div class="a r" style="color:#4e5266;">2021/6/23</div></div>
<div class="a t" style="left:601.62px;top:229.3px;height:11px;line-height:11px;font-size:5.6px;color:#fff;font-weight:bold;width:10.11px;text-align:center;">水</div>
<div class="a" style="left:611.73px;top:190.8px;width:10.1px;height:28.8px;"><div class="a r" style="color:#4e5266;">2021/6/24</div></div>
<div class="a t" style="left:611.73px;top:229.3px;height:11px;line-height:11px;font-size:5.6px;color:#fff;font-weight:bold;width:10.1px;text-align:center;">木</div>
<div class="a" style="left:621.83px;top:190.8px;width:10.11px;height:28.8px;"><div class="a r" style="color:#4e5266;">2021/6/25</div></div>
<div class="a t" style="left:621.83px;top:229.3px;height:11px;line-height:11px;font-size:5.6px;color:#fff;font-weight:bold;width:10.11px;text-align:center;">金</div>
<div class="a " style="left:631.94px;top:190.8px;width:10.2px;height:37.0px;background:#d6d6d6;"></div>
<div class="a " style="left:631.94px;top:227.8px;width:10.2px;height:13.599999999999994px;background:#6d7289;"></div>
<div class="a" style="left:631.94px;top:190.8px;width:10.1px;height:28.8px;"><div class="a r" style="color:#4e5266;">2021/6/26</div></div>
<div class="a t" style="left:631.94px;top:229.3px;height:11px;line-height:11px;font-size:5.6px;color:#fff;font-weight:bold;width:10.1px;text-align:center;">土</div>
<div class="a " style="left:642.04px;top:190.8px;width:10.209999999999999px;height:37.0px;background:#d6d6d6;"></div>
<div class="a " style="left:642.04px;top:227.8px;width:10.209999999999999px;height:13.599999999999994px;background:#6d7289;"></div>
<div class="a" style="left:642.04px;top:190.8px;width:10.11px;height:28.8px;"><div class="a r" style="color:#4e5266;">2021/6/27</div></div>
<div class="a t" style="left:642.04px;top:229.3px;height:11px;line-height:11px;font-size:5.6px;color:#fff;font-weight:bold;width:10.11px;text-align:center;">日</div>
<div class="a" style="left:652.15px;top:190.8px;width:10.1px;height:28.8px;"><div class="a r" style="color:#4e5266;">2021/6/28</div></div>
<div class="a t" style="left:652.15px;top:229.3px;height:11px;line-height:11px;font-size:5.6px;color:#fff;font-weight:bold;width:10.1px;text-align:center;">月</div>
<div class="a" style="left:662.25px;top:190.8px;width:10.11px;height:28.8px;"><div class="a r" style="color:#4e5266;">2021/6/29</div></div>
<div class="a t" style="left:662.25px;top:229.3px;height:11px;line-height:11px;font-size:5.6px;color:#fff;font-weight:bold;width:10.11px;text-align:center;">火</div>
<div class="a" style="left:672.36px;top:190.8px;width:10.1px;height:28.8px;"><div class="a r" style="color:#4e5266;">2021/6/30</div></div>
<div class="a t" style="left:672.36px;top:229.3px;height:11px;line-height:11px;font-size:5.6px;color:#fff;font-weight:bold;width:10.1px;text-align:center;">水</div>
<div class="a" style="left:682.46px;top:190.8px;width:10.11px;height:28.8px;"><div class="a r" style="color:#4e5266;">2021/7/1</div></div>
<div class="a t" style="left:682.46px;top:229.3px;height:11px;line-height:11px;font-size:5.6px;color:#fff;font-weight:bold;width:10.11px;text-align:center;">木</div>
<div class="a" style="left:692.57px;top:190.8px;width:10.1px;height:28.8px;"><div class="a r" style="color:#4e5266;">2021/7/2</div></div>
<div class="a t" style="left:692.57px;top:229.3px;height:11px;line-height:11px;font-size:5.6px;color:#fff;font-weight:bold;width:10.1px;text-align:center;">金</div>
<div class="a " style="left:702.67px;top:190.8px;width:10.209999999999999px;height:37.0px;background:#d6d6d6;"></div>
<div class="a " style="left:702.67px;top:227.8px;width:10.209999999999999px;height:13.599999999999994px;background:#6d7289;"></div>
<div class="a" style="left:702.67px;top:190.8px;width:10.11px;height:28.8px;"><div class="a r" style="color:#4e5266;">2021/7/3</div></div>
<div class="a t" style="left:702.67px;top:229.3px;height:11px;line-height:11px;font-size:5.6px;color:#fff;font-weight:bold;width:10.11px;text-align:center;">土</div>
<div class="a " style="left:712.78px;top:190.8px;width:10.2px;height:37.0px;background:#d6d6d6;"></div>
<div class="a " style="left:712.78px;top:227.8px;width:10.2px;height:13.599999999999994px;background:#6d7289;"></div>
<div class="a" style="left:712.78px;top:190.8px;width:10.1px;height:28.8px;"><div class="a r" style="color:#4e5266;">2021/7/4</div></div>
<div class="a t" style="left:712.78px;top:229.3px;height:11px;line-height:11px;font-size:5.6px;color:#fff;font-weight:bold;width:10.1px;text-align:center;">日</div>
<div class="a" style="left:722.88px;top:190.8px;width:10.11px;height:28.8px;"><div class="a r" style="color:#4e5266;">2021/7/5</div></div>
<div class="a t" style="left:722.88px;top:229.3px;height:11px;line-height:11px;font-size:5.6px;color:#fff;font-weight:bold;width:10.11px;text-align:center;">月</div>
<div class="a" style="left:732.99px;top:190.8px;width:10.1px;height:28.8px;"><div class="a r" style="color:#4e5266;">2021/7/6</div></div>
<div class="a t" style="left:732.99px;top:229.3px;height:11px;line-height:11px;font-size:5.6px;color:#fff;font-weight:bold;width:10.1px;text-align:center;">火</div>
<div class="a" style="left:743.09px;top:190.8px;width:10.11px;height:28.8px;"><div class="a r" style="color:#4e5266;">2021/7/7</div></div>
<div class="a t" style="left:743.09px;top:229.3px;height:11px;line-height:11px;font-size:5.6px;color:#fff;font-weight:bold;width:10.11px;text-align:center;">水</div>
<div class="a" style="left:753.2px;top:190.8px;width:10.1px;height:28.8px;"><div class="a r" style="color:#4e5266;">2021/7/8</div></div>
<div class="a t" style="left:753.2px;top:229.3px;height:11px;line-height:11px;font-size:5.6px;color:#fff;font-weight:bold;width:10.1px;text-align:center;">木</div>
<div class="a" style="left:763.3px;top:190.8px;width:10.11px;height:28.8px;"><div class="a r" style="color:#4e5266;">2021/7/9</div></div>
<div class="a t" style="left:763.3px;top:229.3px;height:11px;line-height:11px;font-size:5.6px;color:#fff;font-weight:bold;width:10.11px;text-align:center;">金</div>
<div class="a " style="left:773.41px;top:190.8px;width:10.2px;height:37.0px;background:#d6d6d6;"></div>
<div class="a " style="left:773.41px;top:227.8px;width:10.2px;height:13.599999999999994px;background:#6d7289;"></div>
<div class="a" style="left:773.41px;top:190.8px;width:10.1px;height:28.8px;"><div class="a r" style="color:#4e5266;">2021/7/10</div></div>
<div class="a t" style="left:773.41px;top:229.3px;height:11px;line-height:11px;font-size:5.6px;color:#fff;font-weight:bold;width:10.1px;text-align:center;">土</div>
<div class="a " style="left:783.51px;top:190.8px;width:10.209999999999999px;height:37.0px;background:#d6d6d6;"></div>
<div class="a " style="left:783.51px;top:227.8px;width:10.209999999999999px;height:13.599999999999994px;background:#6d7289;"></div>
<div class="a" style="left:783.51px;top:190.8px;width:10.11px;height:28.8px;"><div class="a r" style="color:#4e5266;">2021/7/11</div></div>
<div class="a t" style="left:783.51px;top:229.3px;height:11px;line-height:11px;font-size:5.6px;color:#fff;font-weight:bold;width:10.11px;text-align:center;">日</div>
<div class="a" style="left:793.62px;top:190.8px;width:10.1px;height:28.8px;"><div class="a r" style="color:#4e5266;">2021/7/12</div></div>
<div class="a t" style="left:793.62px;top:229.3px;height:11px;line-height:11px;font-size:5.6px;color:#fff;font-weight:bold;width:10.1px;text-align:center;">月</div>
<div class="a" style="left:803.72px;top:190.8px;width:10.11px;height:28.8px;"><div class="a r" style="color:#4e5266;">2021/7/13</div></div>
<div class="a t" style="left:803.72px;top:229.3px;height:11px;line-height:11px;font-size:5.6px;color:#fff;font-weight:bold;width:10.11px;text-align:center;">火</div>
<div class="a" style="left:813.83px;top:190.8px;width:10.1px;height:28.8px;"><div class="a r" style="color:#4e5266;">2021/7/14</div></div>
<div class="a t" style="left:813.83px;top:229.3px;height:11px;line-height:11px;font-size:5.6px;color:#fff;font-weight:bold;width:10.1px;text-align:center;">水</div>
<div class="a" style="left:823.93px;top:190.8px;width:10.11px;height:28.8px;"><div class="a r" style="color:#4e5266;">2021/7/15</div></div>
<div class="a t" style="left:823.93px;top:229.3px;height:11px;line-height:11px;font-size:5.6px;color:#fff;font-weight:bold;width:10.11px;text-align:center;">木</div>
<div class="a" style="left:834.04px;top:190.8px;width:10.1px;height:28.8px;"><div class="a r" style="color:#4e5266;">2021/7/16</div></div>
<div class="a t" style="left:834.04px;top:229.3px;height:11px;line-height:11px;font-size:5.6px;color:#fff;font-weight:bold;width:10.1px;text-align:center;">金</div>
<div class="a " style="left:844.14px;top:190.8px;width:10.209999999999999px;height:37.0px;background:#d6d6d6;"></div>
<div class="a " style="left:844.14px;top:227.8px;width:10.209999999999999px;height:13.599999999999994px;background:#6d7289;"></div>
<div class="a" style="left:844.14px;top:190.8px;width:10.11px;height:28.8px;"><div class="a r" style="color:#4e5266;">2021/7/17</div></div>
<div class="a t" style="left:844.14px;top:229.3px;height:11px;line-height:11px;font-size:5.6px;color:#fff;font-weight:bold;width:10.11px;text-align:center;">土</div>
<div class="a " style="left:854.25px;top:190.8px;width:10.2px;height:37.0px;background:#d6d6d6;"></div>
<div class="a " style="left:854.25px;top:227.8px;width:10.2px;height:13.599999999999994px;background:#6d7289;"></div>
<div class="a" style="left:854.25px;top:190.8px;width:10.1px;height:28.8px;"><div class="a r" style="color:#4e5266;">2021/7/18</div></div>
<div class="a t" style="left:854.25px;top:229.3px;height:11px;line-height:11px;font-size:5.6px;color:#fff;font-weight:bold;width:10.1px;text-align:center;">日</div>
<div class="a" style="left:864.35px;top:190.8px;width:10.11px;height:28.8px;"><div class="a r" style="color:#4e5266;">2021/7/19</div></div>
<div class="a t" style="left:864.35px;top:229.3px;height:11px;line-height:11px;font-size:5.6px;color:#fff;font-weight:bold;width:10.11px;text-align:center;">月</div>
<div class="a" style="left:874.46px;top:190.8px;width:10.1px;height:28.8px;"><div class="a r" style="color:#4e5266;">2021/7/20</div></div>
<div class="a t" style="left:874.46px;top:229.3px;height:11px;line-height:11px;font-size:5.6px;color:#fff;font-weight:bold;width:10.1px;text-align:center;">火</div>
<div class="a" style="left:884.56px;top:190.8px;width:10.11px;height:28.8px;"><div class="a r" style="color:#4e5266;">2021/7/21</div></div>
<div class="a t" style="left:884.56px;top:229.3px;height:11px;line-height:11px;font-size:5.6px;color:#fff;font-weight:bold;width:10.11px;text-align:center;">水</div>
<div class="a " style="left:894.67px;top:190.8px;width:10.2px;height:37.0px;background:#76c9a0;"></div>
<div class="a " style="left:894.67px;top:227.8px;width:10.2px;height:13.599999999999994px;background:#76c9a0;"></div>
<div class="a" style="left:894.67px;top:190.8px;width:10.1px;height:28.8px;"><div class="a r" style="color:#fff;">2021/7/22</div></div>
<div class="a t" style="left:894.67px;top:229.3px;height:11px;line-height:11px;font-size:5.6px;color:#fff;font-weight:bold;width:10.1px;text-align:center;">木</div>
<div class="a " style="left:904.77px;top:190.8px;width:10.209999999999999px;height:37.0px;background:#76c9a0;"></div>
<div class="a " style="left:904.77px;top:227.8px;width:10.209999999999999px;height:13.599999999999994px;background:#76c9a0;"></div>
<div class="a" style="left:904.77px;top:190.8px;width:10.11px;height:28.8px;"><div class="a r" style="color:#fff;">2021/7/23</div></div>
<div class="a t" style="left:904.77px;top:229.3px;height:11px;line-height:11px;font-size:5.6px;color:#fff;font-weight:bold;width:10.11px;text-align:center;">金</div>
<div class="a " style="left:914.88px;top:190.8px;width:10.2px;height:37.0px;background:#d6d6d6;"></div>
<div class="a " style="left:914.88px;top:227.8px;width:10.2px;height:13.599999999999994px;background:#6d7289;"></div>
<div class="a" style="left:914.88px;top:190.8px;width:10.1px;height:28.8px;"><div class="a r" style="color:#4e5266;">2021/7/24</div></div>
<div class="a t" style="left:914.88px;top:229.3px;height:11px;line-height:11px;font-size:5.6px;color:#fff;font-weight:bold;width:10.1px;text-align:center;">土</div>
<div class="a " style="left:924.98px;top:190.8px;width:10.209999999999999px;height:37.0px;background:#d6d6d6;"></div>
<div class="a " style="left:924.98px;top:227.8px;width:10.209999999999999px;height:13.599999999999994px;background:#6d7289;"></div>
<div class="a" style="left:924.98px;top:190.8px;width:10.11px;height:28.8px;"><div class="a r" style="color:#4e5266;">2021/7/25</div></div>
<div class="a t" style="left:924.98px;top:229.3px;height:11px;line-height:11px;font-size:5.6px;color:#fff;font-weight:bold;width:10.11px;text-align:center;">日</div>
<div class="a" style="left:935.09px;top:190.8px;width:10.1px;height:28.8px;"><div class="a r" style="color:#4e5266;">2021/7/26</div></div>
<div class="a t" style="left:935.09px;top:229.3px;height:11px;line-height:11px;font-size:5.6px;color:#fff;font-weight:bold;width:10.1px;text-align:center;">月</div>
<div class="a" style="left:945.19px;top:190.8px;width:10.11px;height:28.8px;"><div class="a r" style="color:#4e5266;">2021/7/27</div></div>
<div class="a t" style="left:945.19px;top:229.3px;height:11px;line-height:11px;font-size:5.6px;color:#fff;font-weight:bold;width:10.11px;text-align:center;">火</div>
<div class="a " style="left:561.2px;top:240.915px;width:394.0999999999999px;height:1px;background:#f3f3f3;"></div>
<div class="a " style="left:561.2px;top:254.16px;width:394.0999999999999px;height:1px;background:#f3f3f3;"></div>
<div class="a " style="left:561.2px;top:267.405px;width:394.0999999999999px;height:1px;background:#f3f3f3;"></div>
<div class="a " style="left:561.2px;top:280.65px;width:394.0999999999999px;height:1px;background:#f3f3f3;"></div>
<div class="a " style="left:561.2px;top:293.895px;width:394.0999999999999px;height:1px;background:#f3f3f3;"></div>
<div class="a " style="left:561.2px;top:307.14px;width:394.0999999999999px;height:1px;background:#f3f3f3;"></div>
<div class="a " style="left:561.2px;top:320.385px;width:394.0999999999999px;height:1px;background:#f3f3f3;"></div>
<div class="a " style="left:561.2px;top:333.63px;width:394.0999999999999px;height:1px;background:#f3f3f3;"></div>
<div class="a " style="left:561.2px;top:346.875px;width:394.0999999999999px;height:1px;background:#f3f3f3;"></div>
<div class="a " style="left:561.2px;top:360.12px;width:394.0999999999999px;height:1px;background:#f3f3f3;"></div>
<div class="a " style="left:561.2px;top:373.365px;width:394.0999999999999px;height:1px;background:#f3f3f3;"></div>
<div class="a " style="left:561.2px;top:386.61px;width:394.0999999999999px;height:1px;background:#f3f3f3;"></div>
<div class="a " style="left:561.2px;top:399.855px;width:394.0999999999999px;height:1px;background:#f3f3f3;"></div>
<div class="a " style="left:561.2px;top:413.09999999999997px;width:394.0999999999999px;height:1px;background:#f3f3f3;"></div>
<div class="a " style="left:561.2px;top:426.34499999999997px;width:394.0999999999999px;height:1px;background:#f3f3f3;"></div>
<div class="a " style="left:561.2px;top:439.59px;width:394.0999999999999px;height:1px;background:#f3f3f3;"></div>
<div class="a " style="left:561.2px;top:452.835px;width:394.0999999999999px;height:1px;background:#f3f3f3;"></div>
<div class="a " style="left:561.2px;top:466.08px;width:394.0999999999999px;height:1px;background:#f3f3f3;"></div>
<div class="a " style="left:561.2px;top:479.32499999999993px;width:394.0999999999999px;height:1px;background:#f3f3f3;"></div>
<div class="a " style="left:561.2px;top:492.56999999999994px;width:394.0999999999999px;height:1px;background:#f3f3f3;"></div>
<div class="a " style="left:561.2px;top:505.81499999999994px;width:394.0999999999999px;height:1px;background:#f3f3f3;"></div>
<div class="a " style="left:640px;top:254.96px;width:22.25px;height:12.444999999999999px;background:#17204a;"></div>
<div class="a " style="left:672.36px;top:268.2px;width:20.21px;height:12.444999999999999px;background:#ffcb5c;"></div>
<div class="a " style="left:743.09px;top:281.45px;width:90.95px;height:12.444999999999999px;background:#ff1a80;"></div>
<div class="a " style="left:945.19px;top:294.69px;width:10.11px;height:12.444999999999999px;background:#3ed598;"></div>
<div class="a " style="left:640px;top:360.92px;width:92.99px;height:12.444999999999999px;background:#6a5af0;"></div>
<div class="a " style="left:834.04px;top:387.41px;width:121.26px;height:12.444999999999999px;background:#8e44ad;"></div>
<div class="a " style="left:722.88px;top:413.9px;width:111.16px;height:12.444999999999999px;background:#1e7145;"></div>
<div class="a " style="left:874.46px;top:427.14px;width:80.84px;height:12.444999999999999px;background:#1e7145;"></div>
<div class="a " style="left:561.2px;top:241.4px;width:10.21px;height:265.41px;background:rgba(200,200,200,0.5);background-image:linear-gradient(to bottom,transparent 0,transparent 12.245px,rgba(255,255,255,.55) 12.245px);background-size:100% 13.245px;background-position:0 0.4px;"></div>
<div class="a " style="left:561.2px;top:506.81px;width:10.21px;height:60.69px;background:rgba(200,200,200,0.5);"></div>
<div class="a " style="left:571.31px;top:241.4px;width:10.2px;height:265.41px;background:rgba(200,200,200,0.5);background-image:linear-gradient(to bottom,transparent 0,transparent 12.245px,rgba(255,255,255,.55) 12.245px);background-size:100% 13.245px;background-position:0 0.4px;"></div>
<div class="a " style="left:571.31px;top:506.81px;width:10.2px;height:60.69px;background:rgba(200,200,200,0.5);"></div>
<div class="a " style="left:631.94px;top:241.4px;width:10.2px;height:265.41px;background:rgba(200,200,200,0.5);background-image:linear-gradient(to bottom,transparent 0,transparent 12.245px,rgba(255,255,255,.55) 12.245px);background-size:100% 13.245px;background-position:0 0.4px;"></div>
<div class="a " style="left:631.94px;top:506.81px;width:10.2px;height:60.69px;background:rgba(200,200,200,0.5);"></div>
<div class="a " style="left:642.04px;top:241.4px;width:10.21px;height:265.41px;background:rgba(200,200,200,0.5);background-image:linear-gradient(to bottom,transparent 0,transparent 12.245px,rgba(255,255,255,.55) 12.245px);background-size:100% 13.245px;background-position:0 0.4px;"></div>
<div class="a " style="left:642.04px;top:506.81px;width:10.21px;height:60.69px;background:rgba(200,200,200,0.5);"></div>
<div class="a " style="left:702.67px;top:241.4px;width:10.21px;height:265.41px;background:rgba(200,200,200,0.5);background-image:linear-gradient(to bottom,transparent 0,transparent 12.245px,rgba(255,255,255,.55) 12.245px);background-size:100% 13.245px;background-position:0 0.4px;"></div>
<div class="a " style="left:702.67px;top:506.81px;width:10.21px;height:60.69px;background:rgba(200,200,200,0.5);"></div>
<div class="a " style="left:712.78px;top:241.4px;width:10.2px;height:265.41px;background:rgba(200,200,200,0.5);background-image:linear-gradient(to bottom,transparent 0,transparent 12.245px,rgba(255,255,255,.55) 12.245px);background-size:100% 13.245px;background-position:0 0.4px;"></div>
<div class="a " style="left:712.78px;top:506.81px;width:10.2px;height:60.69px;background:rgba(200,200,200,0.5);"></div>
<div class="a " style="left:773.41px;top:241.4px;width:10.2px;height:265.41px;background:rgba(200,200,200,0.5);background-image:linear-gradient(to bottom,transparent 0,transparent 12.245px,rgba(255,255,255,.55) 12.245px);background-size:100% 13.245px;background-position:0 0.4px;"></div>
<div class="a " style="left:773.41px;top:506.81px;width:10.2px;height:60.69px;background:rgba(200,200,200,0.5);"></div>
<div class="a " style="left:783.51px;top:241.4px;width:10.21px;height:265.41px;background:rgba(200,200,200,0.5);background-image:linear-gradient(to bottom,transparent 0,transparent 12.245px,rgba(255,255,255,.55) 12.245px);background-size:100% 13.245px;background-position:0 0.4px;"></div>
<div class="a " style="left:783.51px;top:506.81px;width:10.21px;height:60.69px;background:rgba(200,200,200,0.5);"></div>
<div class="a " style="left:844.14px;top:241.4px;width:10.21px;height:265.41px;background:rgba(200,200,200,0.5);background-image:linear-gradient(to bottom,transparent 0,transparent 12.245px,rgba(255,255,255,.55) 12.245px);background-size:100% 13.245px;background-position:0 0.4px;"></div>
<div class="a " style="left:844.14px;top:506.81px;width:10.21px;height:60.69px;background:rgba(200,200,200,0.5);"></div>
<div class="a " style="left:854.25px;top:241.4px;width:10.2px;height:265.41px;background:rgba(200,200,200,0.5);background-image:linear-gradient(to bottom,transparent 0,transparent 12.245px,rgba(255,255,255,.55) 12.245px);background-size:100% 13.245px;background-position:0 0.4px;"></div>
<div class="a " style="left:854.25px;top:506.81px;width:10.2px;height:60.69px;background:rgba(200,200,200,0.5);"></div>
<div class="a " style="left:894.67px;top:241.4px;width:10.2px;height:265.41px;background:rgba(200,200,200,0.5);background-image:linear-gradient(to bottom,transparent 0,transparent 12.245px,rgba(255,255,255,.55) 12.245px);background-size:100% 13.245px;background-position:0 0.4px;"></div>
<div class="a " style="left:894.67px;top:506.81px;width:10.2px;height:60.69px;background:rgba(200,200,200,0.5);"></div>
<div class="a " style="left:904.77px;top:241.4px;width:10.21px;height:265.41px;background:rgba(200,200,200,0.5);background-image:linear-gradient(to bottom,transparent 0,transparent 12.245px,rgba(255,255,255,.55) 12.245px);background-size:100% 13.245px;background-position:0 0.4px;"></div>
<div class="a " style="left:904.77px;top:506.81px;width:10.21px;height:60.69px;background:rgba(200,200,200,0.5);"></div>
<div class="a " style="left:914.88px;top:241.4px;width:10.2px;height:265.41px;background:rgba(200,200,200,0.5);background-image:linear-gradient(to bottom,transparent 0,transparent 12.245px,rgba(255,255,255,.55) 12.245px);background-size:100% 13.245px;background-position:0 0.4px;"></div>
<div class="a " style="left:914.88px;top:506.81px;width:10.2px;height:60.69px;background:rgba(200,200,200,0.5);"></div>
<div class="a " style="left:924.98px;top:241.4px;width:10.21px;height:265.41px;background:rgba(200,200,200,0.5);background-image:linear-gradient(to bottom,transparent 0,transparent 12.245px,rgba(255,255,255,.55) 12.245px);background-size:100% 13.245px;background-position:0 0.4px;"></div>
<div class="a " style="left:924.98px;top:506.81px;width:10.21px;height:60.69px;background:rgba(200,200,200,0.5);"></div>
<div class="a " style="left:662.25px;top:268.2px;width:10.11px;height:12.444999999999999px;background:#c4c4c4;"></div>
<div class="a " style="left:692.57px;top:281.45px;width:50.52px;height:12.444999999999999px;background:#c4c4c4;"></div>
<div class="a " style="left:834.04px;top:294.69px;width:111.15px;height:12.444999999999999px;background:#c4c4c4;"></div>
<div class="a " style="left:823.93px;top:387.41px;width:10.11px;height:12.444999999999999px;background:#c4c4c4;"></div>
<div class="a " style="left:712.78px;top:413.9px;width:10.1px;height:12.444999999999999px;background:#c4c4c4;"></div>
<div class="a " style="left:560.6px;top:241.4px;width:1.1px;height:326.1px;background:#e89a9a;"></div>
<div class="a " style="left:570.7099999999999px;top:241.4px;width:1.1px;height:326.1px;background:#e89a9a;"></div>
<div class="a " style="left:1014.8px;top:116.5px;width:9.2px;height:451.2px;background:#1e1e1e;"></div>
<div class="a " style="left:1016.2px;top:118.2px;width:7.8px;height:8px;background:#4a4a4a;"></div>
<svg style="left:1018.2px;top:120.7px;" width="4" height="3" viewBox="0 0 4 3"><path d="M0 2.8l2-2.5l2 2.5z" fill="#bdbdbd"/></svg>
<div class="a " style="left:1016.2px;top:126.8px;width:7.8px;height:433px;background:#333;"></div>
<div class="a " style="left:1016.2px;top:126.8px;width:7.8px;height:416px;background:#444;"></div>
<div class="a " style="left:1016.2px;top:560px;width:7.8px;height:7.7px;background:#4a4a4a;"></div>
<svg style="left:1018.2px;top:562.6px;" width="4" height="3" viewBox="0 0 4 3"><path d="M0 0.2l2 2.5l2-2.5z" fill="#bdbdbd"/></svg>
<div class="a " style="left:0px;top:567.7px;width:1024px;height:11px;background:#1e1e1e;"></div>
<svg style="left:12px;top:571px;" width="3" height="5" viewBox="0 0 3 5"><path d="M3 0v5l-3-2.5z" fill="#8a8a8a"/></svg>
<svg style="left:24px;top:571px;" width="3" height="5" viewBox="0 0 3 5"><path d="M0 0v5l3-2.5z" fill="#8a8a8a"/></svg>
<div class="a " style="left:44px;top:567.7px;width:52px;height:10.7px;background:#fff;border-bottom:1.4px solid #1e7145;"></div>
<div class="a t" style="left:49.5px;top:566.2px;height:14px;line-height:14px;font-size:7px;color:#2a8a5c;transform:scaleX(0.817);transform-origin:0 50%;">ガントチャート</div>
<div class="a t" style="left:101px;top:566.0px;height:14px;line-height:14px;font-size:7px;color:#fff;transform:scaleX(1.071);transform-origin:0 50%;">設定</div>
<div class="a " style="left:120.5px;top:569.5px;width:1px;height:8px;background:#6a6a6a;"></div>
<svg style="left:134.5px;top:569px;" width="9" height="9" viewBox="0 0 9 9"><circle cx="4.5" cy="4.5" r="4" fill="none" stroke="#e0e0e0" stroke-width="0.8"/><path d="M2.3 4.5h4.4 M4.5 2.3v4.4" stroke="#e0e0e0" stroke-width="0.9"/></svg>
<div class="a " style="left:613.6px;top:571.3px;width:1.3px;height:1.3px;background:#e8e8e8;"></div>
<div class="a " style="left:613.6px;top:573.5px;width:1.3px;height:1.3px;background:#e8e8e8;"></div>
<div class="a " style="left:613.6px;top:575.7px;width:1.3px;height:1.3px;background:#e8e8e8;"></div>
<div class="a " style="left:621.8px;top:570px;width:7.4px;height:7.7px;background:#484848;"></div>
<svg style="left:624px;top:571.5px;" width="3" height="5" viewBox="0 0 3 5"><path d="M3 0v5l-3-2.5z" fill="#9a9a9a"/></svg>
<div class="a " style="left:629.2px;top:570px;width:377.8px;height:7.7px;background:#353535;"></div>
<div class="a " style="left:629.6px;top:570px;width:369.5px;height:7.7px;background:#4c4c4c;"></div>
<div class="a " style="left:1007px;top:570px;width:7.7px;height:7.7px;background:#484848;"></div>
<svg style="left:1009.6px;top:571.5px;" width="3" height="5" viewBox="0 0 3 5"><path d="M0 0v5l3-2.5z" fill="#9a9a9a"/></svg>
<div class="a " style="left:0px;top:578.4px;width:1024px;height:11.6px;background:#2b2b2b;"></div>
<div class="a t" style="left:4px;top:578.3px;height:14px;line-height:14px;font-size:6.8px;color:#fff;transform:scaleX(0.956);transform-origin:0 50%;">準備完了</div>
<svg style="left:41px;top:581px;" width="7" height="8" viewBox="0 0 7 8"><rect x="0.4" y="0.4" width="6.2" height="7.2" fill="none" stroke="#d0d0d0" stroke-width="0.7"/><path d="M0.4 2.4h6.2 M2 4h3 M2 5.6h3" stroke="#d0d0d0" stroke-width="0.6"/><circle cx="5.3" cy="6.4" r="1.4" fill="#d0d0d0"/></svg>
<div class="a " style="left:851px;top:580px;width:21.5px;height:10px;background:#4a4a4a;"></div>
<svg style="left:857px;top:581px;" width="9" height="8" viewBox="0 0 9 8"><rect x="0.4" y="0.4" width="8.2" height="7.2" fill="none" stroke="#e8e8e8" stroke-width="0.8"/><path d="M0.4 2.8h8.2 M0.4 5.2h8.2 M3.2 0.4v7.2 M5.9 0.4v7.2" stroke="#e8e8e8" stroke-width="0.6"/></svg>
<svg style="left:880.5px;top:581px;" width="9" height="8" viewBox="0 0 9 8"><rect x="0.4" y="0.4" width="8.2" height="7.2" fill="none" stroke="#d0d0d0" stroke-width="0.8"/><rect x="2.4" y="2.2" width="4.2" height="3.6" fill="none" stroke="#d0d0d0" stroke-width="0.7"/></svg>
<svg style="left:903px;top:581px;" width="9" height="8" viewBox="0 0 9 8"><rect x="0.4" y="0.4" width="8.2" height="7.2" fill="none" stroke="#d0d0d0" stroke-width="0.8"/><path d="M0.4 4.6h5.2v-4.2" fill="none" stroke="#d0d0d0" stroke-width="0.8"/></svg>
<div class="a " style="left:920.5px;top:585.3px;width:4px;height:0.8px;background:#bdbdbd;"></div>
<div class="a " style="left:927.5px;top:585.4px;width:55px;height:0.7px;background:#bdbdbd;"></div>
<div class="a " style="left:954.3px;top:581.5px;width:2px;height:8px;background:#f0f0f0;"></div>
<div class="a " style="left:985px;top:585.3px;width:4.4px;height:0.8px;background:#bdbdbd;"></div>
<div class="a " style="left:986.8px;top:583.5px;width:0.8px;height:4.4px;background:#bdbdbd;"></div>
<div class="a t" style="left:997px;top:578.5px;height:14px;line-height:14px;font-size:6.8px;color:#fff;transform:scaleX(1.064);transform-origin:0 50%;">100%</div>
<div class="a " style="left:600px;top:199.5px;width:60px;height:216.5px;background:#f0f0f0;border:1px solid #c4c4c4;box-shadow:0 1px 4px rgba(0,0,0,0.16);"></div>
<div class="a " style="left:600px;top:200px;width:59.5px;height:16.5px;background:#fff;"></div>
<div class="a t" style="left:618.3px;top:201.5px;height:14px;line-height:14px;font-size:7px;color:#999;">?</div>
<svg style="left:643.5px;top:206px;" width="5.2" height="5.2" viewBox="0 0 5.2 5.2"><path d="M0 0l5.5 5.5 M5.5 0l-5.5 5.5" stroke="#888" stroke-width="0.6"/></svg>
<div class="a " style="left:600px;top:234px;width:55.5px;height:68.5px;background:#fff;border:1px solid #7a7a7a;"></div>
<div class="a " style="left:601px;top:248px;width:53.5px;height:0.7px;background:#f0f0f0;"></div>
<div class="a " style="left:601px;top:261px;width:53.5px;height:0.7px;background:#f0f0f0;"></div>
<div class="a " style="left:601px;top:274px;width:53.5px;height:0.7px;background:#f0f0f0;"></div>
<div class="a " style="left:601px;top:287px;width:53.5px;height:0.7px;background:#f0f0f0;"></div>
<div class="a " style="left:601px;top:290.5px;width:53.5px;height:11px;background:#e4e4e4;"></div>
<div class="a " style="left:600px;top:321.5px;width:55.5px;height:73.5px;background:#fff;border:1px solid #c8c8c8;"></div>
<div class="a " style="left:600px;top:358.6px;width:55.5px;height:1px;background:#c8c8c8;"></div>
<div class="a " style="left:600px;top:337.4px;width:49.5px;height:11.2px;background:#fff;border:1px solid #b4b4b4;"></div>
<div class="a " style="left:638.5px;top:337.4px;width:11px;height:11.2px;background:#f4f4f4;border:1px solid #b4b4b4;"></div>
<svg style="left:641.3px;top:339.8px;" width="5.5" height="6.5" viewBox="0 0 5.5 6.5"><path d="M2.75 0l2.4 2.6h-1.5v2h-1.8v-2h-1.5z" fill="#111"/><rect x="0.2" y="5.3" width="5.1" height="1" fill="#111"/></svg>
<div class="a " style="left:600px;top:375.5px;width:49px;height:12px;background:#e1e1e1;border:1px solid #adadad;"></div>
<div class="a t" style="left:613.3px;top:374.7px;height:14px;line-height:14px;font-size:7.2px;color:#222;transform:scaleX(1.025);transform-origin:0 50%;">書式(E)...</div>
<div class="a " style="left:600px;top:398.7px;width:52px;height:12.5px;background:#e1e1e1;border:1px solid #adadad;"></div>
<div class="a t" style="left:620.8px;top:398.2px;height:14px;line-height:14px;font-size:7.2px;color:#222;transform:scaleX(0.695);transform-origin:0 50%;">キャンセル</div>
<svg style="left:654px;top:410.5px;" width="5" height="5" viewBox="0 0 5 5"><g fill="#b0b0b0"><rect x="3.6" y="0" width="1" height="1"/><rect x="3.6" y="1.8" width="1" height="1"/><rect x="1.8" y="1.8" width="1" height="1"/><rect x="3.6" y="3.6" width="1" height="1"/><rect x="1.8" y="3.6" width="1" height="1"/><rect x="0" y="3.6" width="1" height="1"/></g></svg>
<div class="a " style="left:311px;top:93.5px;width:308px;height:329.5px;background:#f0f0f0;border:1px solid #c4c4c4;box-shadow:0 1px 5px rgba(0,0,0,0.2);"></div>
<div class="a " style="left:311.5px;top:94px;width:307px;height:17px;background:#fff;"></div>
<div class="a t" style="left:315.5px;top:95.8px;height:14px;line-height:14px;font-size:6.8px;color:#9a9a9a;transform:scaleX(0.872);transform-origin:0 50%;">セルの書式設定</div>
<div class="a t" style="left:579.5px;top:95.8px;height:14px;line-height:14px;font-size:7px;color:#999;">?</div>
<svg style="left:603.5px;top:100px;" width="5.5" height="5.5" viewBox="0 0 5.5 5.5"><path d="M0 0l5.5 5.5 M5.5 0l-5.5 5.5" stroke="#888" stroke-width="0.6"/></svg>
<div class="a " style="left:315.5px;top:128.5px;width:298.5px;height:270.5px;background:#fff;border:1px solid #d9d9d9;"></div>
<div class="a " style="left:315.5px;top:116px;width:38.0px;height:13px;background:#f0f0f0;border:1px solid #d9d9d9;border-bottom:none;"></div>
<div class="a t" style="left:321px;top:115.5px;height:14px;line-height:14px;font-size:7.2px;color:#222;transform:scaleX(0.921);transform-origin:0 50%;">表示形式</div>
<div class="a " style="left:353px;top:116px;width:36px;height:13px;background:#f0f0f0;border:1px solid #d9d9d9;border-bottom:none;"></div>
<div class="a t" style="left:361px;top:115.5px;height:14px;line-height:14px;font-size:7.2px;color:#222;transform:scaleX(0.713);transform-origin:0 50%;">フォント</div>
<div class="a " style="left:388.5px;top:116px;width:34.5px;height:13px;background:#f0f0f0;border:1px solid #d9d9d9;border-bottom:none;"></div>
<div class="a t" style="left:398.5px;top:115.5px;height:14px;line-height:14px;font-size:7.2px;color:#222;transform:scaleX(1.042);transform-origin:0 50%;">罫線</div>
<div class="a " style="left:422px;top:114px;width:42px;height:15.5px;background:#fff;border:1px solid #d9d9d9;border-bottom:none;"></div>
<div class="a t" style="left:429.5px;top:115.5px;height:14px;line-height:14px;font-size:7.2px;color:#222;transform:scaleX(0.777);transform-origin:0 50%;">塗りつぶし</div>
<div class="a " style="left:422px;top:112px;width:46.5px;height:22px;border:2px solid #f01010;border-radius:1px;"></div>
<div class="a t" style="left:326px;top:132.3px;height:14px;line-height:14px;font-size:7.2px;color:#222;transform:scaleX(0.968);transform-origin:0 50%;">背景色(<u>C</u>):</div>
<div class="a " style="left:328px;top:147.3px;width:96px;height:10.5px;background:#fff;border:1px solid #a6a6a6;"></div>
<div class="a t" style="left:328px;top:145.2px;height:15px;line-height:15px;font-size:7.4px;color:#222;width:96px;text-align:center;transform:scaleX(0.789);transform-origin:50% 50%;">色なし</div>
<div class="a " style="left:328.0px;top:161.5px;width:7.4px;height:7.4px;background:#ffffff;border:0.6px solid #c0c0c0;"></div>
<div class="a " style="left:337.68px;top:161.5px;width:7.4px;height:7.4px;background:#17204a;border:0.6px solid #17204a;"></div>
<div class="a " style="left:347.36px;top:161.5px;width:7.4px;height:7.4px;background:#3ed598;border:0.6px solid #3ed598;"></div>
<div class="a " style="left:357.04px;top:161.5px;width:7.4px;height:7.4px;background:#cdf564;border:0.6px solid #cdf564;"></div>
<div class="a " style="left:366.72px;top:161.5px;width:7.4px;height:7.4px;background:#ffcb5c;border:0.6px solid #ffcb5c;"></div>
<div class="a " style="left:376.4px;top:161.5px;width:7.4px;height:7.4px;background:#ff1a80;border:0.6px solid #ff1a80;"></div>
<div class="a " style="left:386.08px;top:161.5px;width:7.4px;height:7.4px;background:#ff5c93;border:0.6px solid #ff5c93;"></div>
<div class="a " style="left:395.76px;top:161.5px;width:7.4px;height:7.4px;background:#8e44ad;border:0.6px solid #8e44ad;"></div>
<div class="a " style="left:405.44px;top:161.5px;width:7.4px;height:7.4px;background:#6fe0f0;border:0.6px solid #6fe0f0;"></div>
<div class="a " style="left:415.12px;top:161.5px;width:7.4px;height:7.4px;background:#6a5af0;border:0.6px solid #6a5af0;"></div>
<div class="a " style="left:326px;top:172px;width:100.5px;height:0.8px;background:#a9a9a9;"></div>
<div class="a " style="left:328.0px;top:175.5px;width:7.4px;height:7.4px;background:#f2f2f2;border:0.6px solid #d0d0d0;"></div>
<div class="a " style="left:337.68px;top:175.5px;width:7.4px;height:7.4px;background:#dfe3f5;border:0.6px solid #d0d0d0;"></div>
<div class="a " style="left:347.36px;top:175.5px;width:7.4px;height:7.4px;background:#d8f7ea;border:0.6px solid #d0d0d0;"></div>
<div class="a " style="left:357.04px;top:175.5px;width:7.4px;height:7.4px;background:#f5fde0;border:0.6px solid #d0d0d0;"></div>
<div class="a " style="left:366.72px;top:175.5px;width:7.4px;height:7.4px;background:#fff5de;border:0.6px solid #d0d0d0;"></div>
<div class="a " style="left:376.4px;top:175.5px;width:7.4px;height:7.4px;background:#ffd1e6;border:0.6px solid #d0d0d0;"></div>
<div class="a " style="left:386.08px;top:175.5px;width:7.4px;height:7.4px;background:#ffdee9;border:0.6px solid #d0d0d0;"></div>
<div class="a " style="left:395.76px;top:175.5px;width:7.4px;height:7.4px;background:#e9d8f0;border:0.6px solid #d0d0d0;"></div>
<div class="a " style="left:405.44px;top:175.5px;width:7.4px;height:7.4px;background:#e2f9fc;border:0.6px solid #d0d0d0;"></div>
<div class="a " style="left:415.12px;top:175.5px;width:7.4px;height:7.4px;background:#e1defc;border:0.6px solid #d0d0d0;"></div>
<div class="a " style="left:328.0px;top:184.8px;width:7.4px;height:7.4px;background:#d9d9d9;border:0.6px solid #d0d0d0;"></div>
<div class="a " style="left:337.68px;top:184.8px;width:7.4px;height:7.4px;background:#a9b4e3;border:0.6px solid #d0d0d0;"></div>
<div class="a " style="left:347.36px;top:184.8px;width:7.4px;height:7.4px;background:#b2eed6;border:0.6px solid #d0d0d0;"></div>
<div class="a " style="left:357.04px;top:184.8px;width:7.4px;height:7.4px;background:#ebfbc1;border:0.6px solid #d0d0d0;"></div>
<div class="a " style="left:366.72px;top:184.8px;width:7.4px;height:7.4px;background:#ffeabe;border:0.6px solid #d0d0d0;"></div>
<div class="a " style="left:376.4px;top:184.8px;width:7.4px;height:7.4px;background:#ffa3cc;border:0.6px solid #d0d0d0;"></div>
<div class="a " style="left:386.08px;top:184.8px;width:7.4px;height:7.4px;background:#ffbed4;border:0.6px solid #d0d0d0;"></div>
<div class="a " style="left:395.76px;top:184.8px;width:7.4px;height:7.4px;background:#d3b2e1;border:0.6px solid #d0d0d0;"></div>
<div class="a " style="left:405.44px;top:184.8px;width:7.4px;height:7.4px;background:#c5f3f9;border:0.6px solid #d0d0d0;"></div>
<div class="a " style="left:415.12px;top:184.8px;width:7.4px;height:7.4px;background:#c3bdf9;border:0.6px solid #d0d0d0;"></div>
<div class="a " style="left:328.0px;top:194.1px;width:7.4px;height:7.4px;background:#bfbfbf;border:0.6px solid #d0d0d0;"></div>
<div class="a " style="left:337.68px;top:194.1px;width:7.4px;height:7.4px;background:#6f82d0;border:0.6px solid #d0d0d0;"></div>
<div class="a " style="left:347.36px;top:194.1px;width:7.4px;height:7.4px;background:#8be6c1;border:0.6px solid #d0d0d0;"></div>
<div class="a " style="left:357.04px;top:194.1px;width:7.4px;height:7.4px;background:#e1f9a2;border:0.6px solid #d0d0d0;"></div>
<div class="a " style="left:366.72px;top:194.1px;width:7.4px;height:7.4px;background:#ffe09d;border:0.6px solid #d0d0d0;"></div>
<div class="a " style="left:376.4px;top:194.1px;width:7.4px;height:7.4px;background:#ff76b3;border:0.6px solid #d0d0d0;"></div>
<div class="a " style="left:386.08px;top:194.1px;width:7.4px;height:7.4px;background:#ff9dbe;border:0.6px solid #d0d0d0;"></div>
<div class="a " style="left:395.76px;top:194.1px;width:7.4px;height:7.4px;background:#bd8bd1;border:0.6px solid #d0d0d0;"></div>
<div class="a " style="left:405.44px;top:194.1px;width:7.4px;height:7.4px;background:#a9ecf6;border:0.6px solid #d0d0d0;"></div>
<div class="a " style="left:415.12px;top:194.1px;width:7.4px;height:7.4px;background:#a69cf6;border:0.6px solid #d0d0d0;"></div>
<div class="a " style="left:328.0px;top:203.3px;width:7.4px;height:7.4px;background:#a6a6a6;border:0.6px solid #a6a6a6;"></div>
<div class="a " style="left:337.68px;top:203.3px;width:7.4px;height:7.4px;background:#2a3a8f;border:0.6px solid #2a3a8f;"></div>
<div class="a " style="left:347.36px;top:203.3px;width:7.4px;height:7.4px;background:#25a974;border:0.6px solid #25a974;"></div>
<div class="a " style="left:357.04px;top:203.3px;width:7.4px;height:7.4px;background:#b3f013;border:0.6px solid #b3f013;"></div>
<div class="a " style="left:366.72px;top:203.3px;width:7.4px;height:7.4px;background:#ffaf05;border:0.6px solid #ffaf05;"></div>
<div class="a " style="left:376.4px;top:203.3px;width:7.4px;height:7.4px;background:#d3005e;border:0.6px solid #d3005e;"></div>
<div class="a " style="left:386.08px;top:203.3px;width:7.4px;height:7.4px;background:#ff055a;border:0.6px solid #ff055a;"></div>
<div class="a " style="left:395.76px;top:203.3px;width:7.4px;height:7.4px;background:#6a3382;border:0.6px solid #6a3382;"></div>
<div class="a " style="left:405.44px;top:203.3px;width:7.4px;height:7.4px;background:#20cfe8;border:0.6px solid #20cfe8;"></div>
<div class="a " style="left:415.12px;top:203.3px;width:7.4px;height:7.4px;background:#2b15e3;border:0.6px solid #2b15e3;"></div>
<div class="a " style="left:328.0px;top:212.5px;width:7.4px;height:7.4px;background:#808080;border:0.6px solid #808080;"></div>
<div class="a " style="left:337.68px;top:212.5px;width:7.4px;height:7.4px;background:#1a2458;border:0.6px solid #1a2458;"></div>
<div class="a " style="left:347.36px;top:212.5px;width:7.4px;height:7.4px;background:#19714d;border:0.6px solid #19714d;"></div>
<div class="a " style="left:357.04px;top:212.5px;width:7.4px;height:7.4px;background:#78a20a;border:0.6px solid #78a20a;"></div>
<div class="a " style="left:366.72px;top:212.5px;width:7.4px;height:7.4px;background:#ae7600;border:0.6px solid #ae7600;"></div>
<div class="a " style="left:376.4px;top:212.5px;width:7.4px;height:7.4px;background:#8c003f;border:0.6px solid #8c003f;"></div>
<div class="a " style="left:386.08px;top:212.5px;width:7.4px;height:7.4px;background:#ae003b;border:0.6px solid #ae003b;"></div>
<div class="a " style="left:395.76px;top:212.5px;width:7.4px;height:7.4px;background:#472256;border:0.6px solid #472256;"></div>
<div class="a " style="left:405.44px;top:212.5px;width:7.4px;height:7.4px;background:#118d9f;border:0.6px solid #118d9f;"></div>
<div class="a " style="left:415.12px;top:212.5px;width:7.4px;height:7.4px;background:#1c0e97;border:0.6px solid #1c0e97;"></div>
<div class="a " style="left:346.16px;top:211.3px;width:9.8px;height:9.8px;border:0.8px solid #9fc4ef;"></div>
<div class="a " style="left:326px;top:221.2px;width:100.5px;height:0.8px;background:#a9a9a9;"></div>
<div class="a " style="left:328.0px;top:226.5px;width:7.4px;height:7.4px;background:#c00000;border:0.6px solid #c00000;"></div>
<div class="a " style="left:337.68px;top:226.5px;width:7.4px;height:7.4px;background:#ff0000;border:0.6px solid #ff0000;"></div>
<div class="a " style="left:347.36px;top:226.5px;width:7.4px;height:7.4px;background:#ffc000;border:0.6px solid #ffc000;"></div>
<div class="a " style="left:357.04px;top:226.5px;width:7.4px;height:7.4px;background:#ffff00;border:0.6px solid #ffff00;"></div>
<div class="a " style="left:366.72px;top:226.5px;width:7.4px;height:7.4px;background:#92d050;border:0.6px solid #92d050;"></div>
<div class="a " style="left:376.4px;top:226.5px;width:7.4px;height:7.4px;background:#00b050;border:0.6px solid #00b050;"></div>
<div class="a " style="left:386.08px;top:226.5px;width:7.4px;height:7.4px;background:#00b0f0;border:0.6px solid #00b0f0;"></div>
<div class="a " style="left:395.76px;top:226.5px;width:7.4px;height:7.4px;background:#0070c0;border:0.6px solid #0070c0;"></div>
<div class="a " style="left:405.44px;top:226.5px;width:7.4px;height:7.4px;background:#002060;border:0.6px solid #002060;"></div>
<div class="a " style="left:415.12px;top:226.5px;width:7.4px;height:7.4px;background:#7030a0;border:0.6px solid #7030a0;"></div>
<div class="a " style="left:326.5px;top:244.2px;width:65px;height:13.6px;background:#e1e1e1;border:1px solid #b9b9b9;"></div>
<div class="a t" style="left:332px;top:244.2px;height:14px;line-height:14px;font-size:7.2px;color:#222;transform:scaleX(0.863);transform-origin:0 50%;">塗りつぶし効果(<u>I</u>)...</div>
<div class="a " style="left:398.3px;top:244.2px;width:58.3px;height:13.6px;background:#e1e1e1;border:1px solid #b9b9b9;"></div>
<div class="a t" style="left:404px;top:244.2px;height:14px;line-height:14px;font-size:7.2px;color:#222;transform:scaleX(0.891);transform-origin:0 50%;">その他の色(<u>M</u>)...</div>
<div class="a t" style="left:470.5px;top:132.3px;height:14px;line-height:14px;font-size:7.2px;color:#222;transform:scaleX(0.837);transform-origin:0 50%;">パターンの色(<u>A</u>):</div>
<div class="a " style="left:470.5px;top:146px;width:115.3px;height:13.5px;background:#fff;border:1px solid #c2c2c2;"></div>
<div class="a t" style="left:470.5px;top:145.4px;height:15px;line-height:15px;font-size:7.4px;color:#222;width:106px;text-align:center;transform:scaleX(0.912);transform-origin:50% 50%;">自動</div>
<div class="a " style="left:577px;top:147px;width:8px;height:11.5px;background:#f0f0f0;border:1px solid #d0d0d0;"></div>
<svg style="left:579px;top:151.5px;" width="4.4" height="3" viewBox="0 0 4.4 3"><path d="M0.2 0.2l2 2.1l2-2.1" fill="none" stroke="#555" stroke-width="0.7"/></svg>
<div class="a t" style="left:470.5px;top:159.5px;height:14px;line-height:14px;font-size:7.2px;color:#222;transform:scaleX(0.845);transform-origin:0 50%;">パターンの種類(<u>P</u>):</div>
<div class="a " style="left:470.5px;top:172.5px;width:115.3px;height:14px;background:#fff;border:1px solid #c2c2c2;"></div>
<div class="a " style="left:577px;top:173.5px;width:8px;height:12px;background:#f0f0f0;border:1px solid #d0d0d0;"></div>
<svg style="left:579px;top:178.2px;" width="4.4" height="3" viewBox="0 0 4.4 3"><path d="M0.2 0.2l2 2.1l2-2.1" fill="none" stroke="#555" stroke-width="0.7"/></svg>
<div class="a " style="left:321.3px;top:328px;width:287.5px;height:42.3px;border:1px solid #dcdcdc;"></div>
<div class="a " style="left:323px;top:323px;width:23.5px;height:9px;background:#fff;"></div>
<div class="a t" style="left:324.5px;top:321.3px;height:13px;line-height:13px;font-size:6.6px;color:#222;transform:scaleX(0.802);transform-origin:0 50%;">サンプル</div>
<div class="a " style="left:328px;top:336.7px;width:274px;height:29.2px;background:#1e7145;"></div>
<div class="a " style="left:559.9px;top:379px;width:48.8px;height:13.6px;background:#e1e1e1;border:1px solid #b9b9b9;"></div>
<div class="a t" style="left:573px;top:379.0px;height:14px;line-height:14px;font-size:7.2px;color:#222;transform:scaleX(0.728);transform-origin:0 50%;">クリア(<u>R</u>)</div>
<div class="a " style="left:510px;top:405px;width:49.3px;height:13.7px;background:#e1e1e1;border:1.3px solid #0a78d7;"></div>
<div class="a t" style="left:510px;top:405.0px;height:14px;line-height:14px;font-size:7.2px;color:#222;width:49.3px;text-align:center;">OK</div>
<div class="a " style="left:565.8px;top:405px;width:49.3px;height:13.7px;background:#e1e1e1;border:1px solid #b9b9b9;"></div>
<div class="a t" style="left:577.5px;top:405.05px;height:14px;line-height:14px;font-size:7.2px;color:#222;transform:scaleX(0.709);transform-origin:0 50%;">キャンセル</div>
<svg style="left:495.5px;top:322.5px;" width="6" height="9" viewBox="0 0 6 9"><path d="M0.4 0.4v7l1.7-1.6l1.2 2.6l1-0.5l-1.2-2.5h2.2z" fill="#fff" stroke="#222" stroke-width="0.6"/></svg>
</body></html>
